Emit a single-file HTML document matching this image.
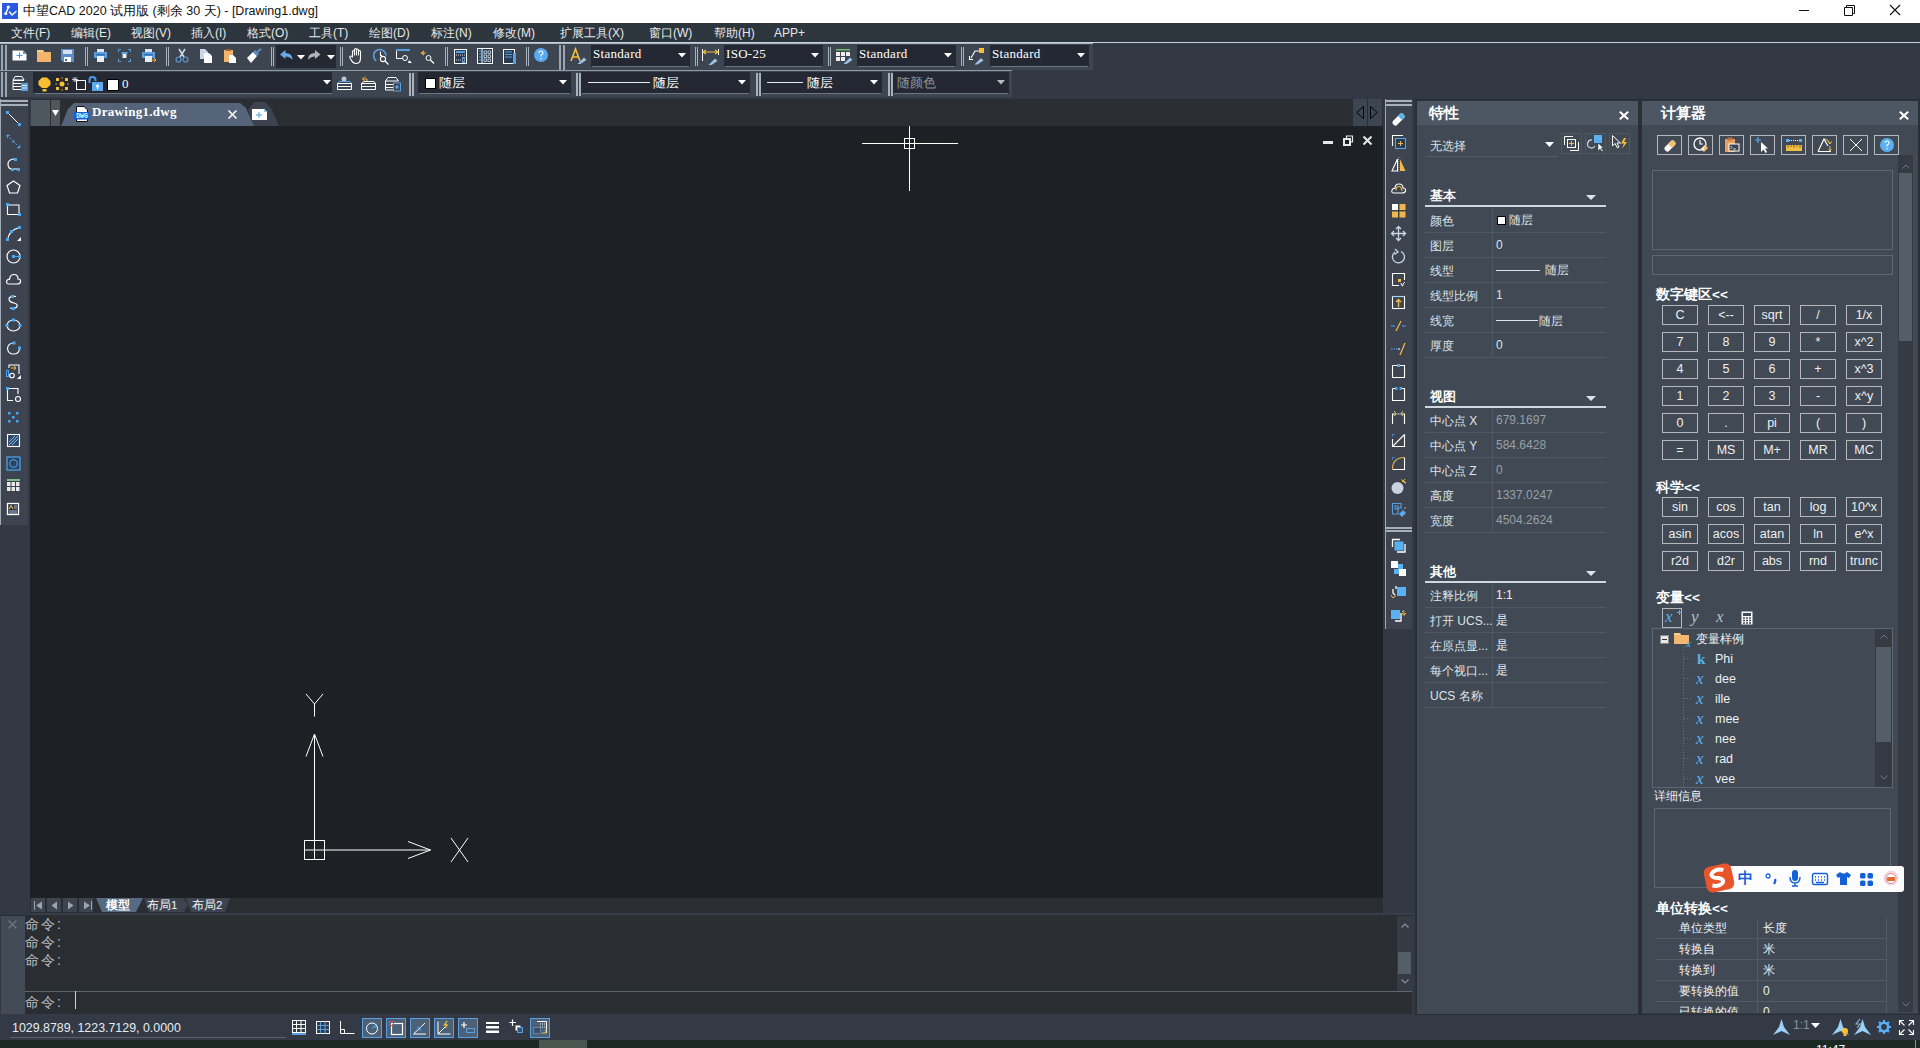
<!DOCTYPE html>
<html><head><meta charset="utf-8">
<style>
*{box-sizing:border-box;margin:0;padding:0}
html,body{width:1920px;height:1048px;overflow:hidden;background:#333944;font-family:"Liberation Sans",sans-serif;font-size:12px;color:#e8ecf0}
.a{position:absolute}
svg{position:absolute;overflow:visible}
.ss{font-family:"Liberation Serif",serif;font-size:13px;letter-spacing:0.3px;white-space:nowrap}
.nw{white-space:nowrap}
</style></head><body>
<!-- title bar -->
<div class="a" style="left:0;top:0;width:1920px;height:23px;background:#fff"></div>
<div class="a" style="left:2px;top:3px;width:16px;height:16px;background:#2a5ae0"></div>
<svg style="left:2px;top:3px" width="16" height="16"><path d="M6.5 4 L3.8 10.5 M7.5 9 L10 12 L14 8.5" stroke="#fff" stroke-width="1.5" fill="none" stroke-linecap="round"/><circle cx="6.3" cy="4" r="1.6" fill="#fff"/><circle cx="3.8" cy="10.5" r="1.6" fill="#fff"/></svg>
<div class="a nw" style="left:23px;top:3px;font-size:12.5px;color:#111;line-height:16px">中望CAD 2020 试用版 (剩余 30 天) - [Drawing1.dwg]</div>
<svg style="left:1799px;top:5px" width="110" height="12"><path d="M0 5.5 H10" stroke="#111" stroke-width="1"/><path d="M45.5 2.5 H53.5 V10.5 H45.5 Z M47.5 2.5 V0.5 H55.5 V8.5 H53.5" stroke="#111" stroke-width="1" fill="none"/><path d="M91 0 L101 10 M101 0 L91 10" stroke="#111" stroke-width="1.1"/></svg>
<!-- menu -->
<div class="a" style="left:0;top:23px;width:1920px;height:19px;background:#2d353d"></div>
<div class="a nw" style="left:0;top:24px;height:18px;line-height:18px;color:#e4e8ec;font-size:12px">
<span class="a" style="left:11px">文件(F)</span><span class="a" style="left:71px">编辑(E)</span><span class="a" style="left:131px">视图(V)</span><span class="a" style="left:191px">插入(I)</span><span class="a" style="left:247px">格式(O)</span><span class="a" style="left:309px">工具(T)</span><span class="a" style="left:369px">绘图(D)</span><span class="a" style="left:431px">标注(N)</span><span class="a" style="left:493px">修改(M)</span><span class="a" style="left:560px">扩展工具(X)</span><span class="a" style="left:649px">窗口(W)</span><span class="a" style="left:714px">帮助(H)</span><span class="a" style="left:774px">APP+</span>
</div>
<div class="a" style="left:0;top:42px;width:1920px;height:1px;background:#c8d2dc"></div>
<!-- tab bar -->
<div class="a" style="left:31px;top:99px;width:1352px;height:27px;background:#2a2d32"></div>
<!-- drawing -->
<div class="a" style="left:30px;top:126px;width:1353px;height:772px;background:#1d2025"></div>
<!-- layout tabs bar -->
<div class="a" style="left:30px;top:898px;width:1353px;height:15px;background:#2a2d32"></div>
<!-- command -->
<div class="a" style="left:1px;top:915px;width:1411px;height:99px;background:#2a2d32"></div>
<!-- left toolbar -->
<div class="a" style="left:0;top:99px;width:28px;height:426px;background:#3d4450;border-left:1px solid #a0aab4"></div>
<!-- right toolbar -->
<div class="a" style="left:1385px;top:99px;width:27px;height:530px;background:#3d4450;border-left:1px solid #a0aab4"></div>
<!-- props panel -->
<div class="a" style="left:1417px;top:101px;width:220px;height:911px;background:#404853"></div>
<!-- calc panel -->
<div class="a" style="left:1642px;top:101px;width:273px;height:911px;background:#404853"></div>
<!-- status -->
<div class="a" style="left:0;top:1014px;width:1920px;height:26px;background:#333a45"></div>
<!-- taskbar -->
<div class="a" style="left:0;top:1040px;width:1920px;height:8px;background:#1c2a26"></div>

<div class="a" style="left:0px;top:43px;width:1093px;height:27px;background:#3d4550;border-top:1px solid #aab5c0"></div>
<div class="a" style="left:1px;top:45px;width:2px;height:25px;background:#9aa6b2;"></div>
<div class="a" style="left:5px;top:45px;width:2px;height:25px;background:#9aa6b2;"></div>
<svg style="left:12px;top:50px" width="15" height="11" viewBox="0 0 15 11"><path d="M0.5 0.5 H11 L14.5 4 V10.5 H0.5 Z" fill="#fff"/><path d="M11 0.5 L14.5 4 H11Z" fill="#5aa0e0"/><path d="M7.5 2.5 V8.5 M4.5 5.5 H10.5" stroke="#4a94dc" stroke-width="1"/></svg>
<svg style="left:37px;top:50px" width="14" height="12" viewBox="0 0 14 12"><path d="M0 0 H6 L7 2 H14 V12 H0Z" fill="#f2b36b"/><path d="M0 0 H6 L7 2 H0Z" fill="#f8d089"/></svg>
<svg style="left:61px;top:49px" width="13" height="13" viewBox="0 0 13 13"><path d="M0 0 H13 V13 H2 L0 11Z" fill="#5b8fcc"/><rect x="2" y="1" width="9" height="4" fill="#d8e2ee"/><rect x="3" y="8" width="7" height="5" fill="#fff"/><rect x="4" y="10" width="2" height="2" fill="#3a6aa8"/></svg>
<div class="a" style="left:85px;top:47px;width:1px;height:19px;background:#a6b1bc;"></div>
<div class="a" style="left:87px;top:47px;width:1px;height:19px;background:#a6b1bc;"></div>
<svg style="left:94px;top:49px" width="13" height="13" viewBox="0 0 13 13"><rect x="3" y="0" width="7" height="4" fill="#dde6f0"/><rect x="0" y="3" width="13" height="6" fill="#5aa0e0"/><rect x="2" y="5" width="9" height="1.5" fill="#3a6aa8"/><rect x="3" y="7" width="7" height="6" fill="#e8eef6"/></svg>
<svg style="left:118px;top:49px" width="13" height="13" viewBox="0 0 13 13"><path d="M0.5 3 V0.5 H3 M10 0.5 H12.5 V3 M12.5 10 V12.5 H10 M3 12.5 H0.5 V10" stroke="#5aa0e0" stroke-width="1" fill="none"/><rect x="3.5" y="3" width="6" height="2" fill="#5aa0e0"/><rect x="4.5" y="5" width="4" height="4" fill="#e8eef6"/></svg>
<svg style="left:142px;top:49px" width="15" height="14" viewBox="0 0 15 14"><rect x="3" y="0" width="7" height="4" fill="#dde6f0"/><rect x="0" y="3" width="13" height="6" fill="#5aa0e0"/><rect x="2" y="5" width="9" height="1.5" fill="#3a6aa8"/><rect x="3" y="7" width="7" height="6" fill="#e8eef6"/><path d="M9 11 H14 M12 9 L14 11 L12 13" stroke="#f0b040" stroke-width="1" fill="none"/></svg>
<div class="a" style="left:166px;top:47px;width:1px;height:19px;background:#a6b1bc;"></div>
<div class="a" style="left:168px;top:47px;width:1px;height:19px;background:#a6b1bc;"></div>
<svg style="left:175px;top:49px" width="14" height="15" viewBox="0 0 14 15"><path d="M4 0 L9 8 M10 0 L5 8" stroke="#c9d8ea" stroke-width="1.6"/><circle cx="3.5" cy="10.5" r="2.5" stroke="#5b97d6" stroke-width="1.2" fill="none"/><circle cx="10.5" cy="10.5" r="2.5" stroke="#5b97d6" stroke-width="1.2" fill="none"/></svg>
<svg style="left:200px;top:49px" width="13" height="14" viewBox="0 0 13 14"><path d="M0 0 H5 L8 3 V10 H0Z" fill="#c9d8ea"/><path d="M4 4 H9 L12 7 V14 H4Z" fill="#fff"/></svg>
<svg style="left:224px;top:49px" width="13" height="14" viewBox="0 0 13 14"><rect x="0" y="1" width="9" height="12" fill="#f2b36b"/><rect x="2" y="0" width="5" height="2" fill="#9a6030"/><path d="M5 6 H9 L12 9 V14 H5Z" fill="#fff"/></svg>
<svg style="left:247px;top:49px" width="15" height="15" viewBox="0 0 15 15"><path d="M0 9 L6 3 L10 7 L4 14Z" fill="#fff"/><path d="M6 3 L10 7 L12 5 L8 1Z" fill="#5b8fcc"/><path d="M10 3 L14 0" stroke="#5b8fcc" stroke-width="2"/></svg>
<div class="a" style="left:271px;top:47px;width:1px;height:19px;background:#a6b1bc;"></div>
<div class="a" style="left:273px;top:47px;width:1px;height:19px;background:#a6b1bc;"></div>
<div class="a" style="left:276px;top:45px;width:60px;height:23px;background:#232833;"></div>
<svg style="left:280px;top:50px" width="13" height="10" viewBox="0 0 13 10"><path d="M0 4.5 L5.5 0 V3 Q12.5 3 12.5 10 Q10 6.5 5.5 6.5 V9Z" fill="#6aa8ea"/></svg>
<svg style="left:297px;top:55px" width="8" height="5" viewBox="0 0 8 5"><path d="M0 0 H8 L4 4.5Z" fill="#fff"/></svg>
<svg style="left:308px;top:50px" width="13" height="10" viewBox="0 0 13 10"><path d="M12.5 4.5 L7 0 V3 Q0 3 0 10 Q2.5 6.5 7 6.5 V9Z" fill="#b0b4b8"/></svg>
<svg style="left:327px;top:55px" width="8" height="5" viewBox="0 0 8 5"><path d="M0 0 H8 L4 4.5Z" fill="#fff"/></svg>
<div class="a" style="left:340px;top:47px;width:1px;height:19px;background:#a6b1bc;"></div>
<div class="a" style="left:342px;top:47px;width:1px;height:19px;background:#a6b1bc;"></div>
<svg style="left:349px;top:48px" width="14" height="16" viewBox="0 0 14 16"><path d="M3.5 9 V3.5 Q3.5 2.5 4.5 2.5 Q5.5 2.5 5.5 3.5 V7 V1.5 Q5.5 0.5 6.5 0.5 Q7.5 0.5 7.5 1.5 V7 V2 Q7.5 1 8.5 1 Q9.5 1 9.5 2 V7 V3.5 Q9.5 2.5 10.5 2.5 Q11.5 2.5 11.5 3.5 V10 Q11.5 15.5 7 15.5 Q4 15.5 2.5 12.5 L0.8 9.5 Q0.5 8 2 8 Q3 8 3.5 9.5" stroke="#fff" stroke-width="1.1" fill="none" stroke-linejoin="round"/></svg>
<svg style="left:373px;top:49px" width="17" height="16" viewBox="0 0 17 16"><path d="M3.2 11.8 A6.2 6.2 0 1 1 13 6.5" stroke="#5aa0e0" stroke-width="1.6" fill="none"/><path d="M7.5 2.5 V6.5 H9" stroke="#fff" stroke-width="1.1" fill="none"/><circle cx="10" cy="10" r="2.6" stroke="#fff" stroke-width="1.1" fill="none"/><path d="M12 12 L15.5 15.5" stroke="#fff" stroke-width="1.3"/></svg>
<svg style="left:396px;top:49px" width="17" height="15" viewBox="0 0 17 15"><rect x="0" y="0" width="14" height="2" fill="#5aa0e0"/><path d="M0.5 2 V9.5 H6" stroke="#fff" stroke-width="1" fill="none"/><circle cx="9" cy="9" r="2.5" stroke="#fff" stroke-width="1" fill="none"/><path d="M13 11 L16 14 H12Z" fill="#fff"/></svg>
<svg style="left:421px;top:50px" width="14" height="14" viewBox="0 0 14 14"><path d="M0.5 3 H5 M3 1 L0.5 3 L3 5" stroke="#f0b040" stroke-width="1.1" fill="none"/><circle cx="7.5" cy="8" r="2.5" stroke="#fff" stroke-width="1" fill="none"/><path d="M9.5 10 L13 13.5" stroke="#fff" stroke-width="1.2"/></svg>
<div class="a" style="left:445px;top:47px;width:1px;height:19px;background:#a6b1bc;"></div>
<div class="a" style="left:447px;top:47px;width:1px;height:19px;background:#a6b1bc;"></div>
<svg style="left:454px;top:49px" width="13" height="15" viewBox="0 0 13 15"><rect x="0.5" y="0.5" width="12" height="14" stroke="#fff" stroke-width="1" fill="#2a3a50"/><rect x="2" y="2" width="9" height="2" fill="#5aa0e0"/><path d="M2 6 H11 M2 11 H11" stroke="#dde" stroke-width="1" stroke-dasharray="1 1"/><rect x="8" y="8" width="3" height="2" fill="#5aa0e0"/><rect x="8" y="12" width="3" height="2" fill="#5aa0e0"/></svg>
<svg style="left:477px;top:48px" width="16" height="16" viewBox="0 0 16 16"><rect x="0.5" y="0.5" width="15" height="15" stroke="#fff" stroke-width="1" fill="#2a3a50"/><path d="M5 1 V15" stroke="#fff"/><path d="M2 3 H4 M2 6 H4 M2 9 H4 M2 12 H4" stroke="#5aa0e0"/><rect x="7" y="3" width="2.5" height="2.5" stroke="#cde" stroke-width="0.8" fill="none"/><rect x="11" y="3" width="2.5" height="2.5" stroke="#cde" stroke-width="0.8" fill="none"/><rect x="7" y="7" width="2.5" height="2.5" stroke="#cde" stroke-width="0.8" fill="none"/><rect x="11" y="7" width="2.5" height="2.5" stroke="#cde" stroke-width="0.8" fill="none"/><rect x="7" y="11" width="2.5" height="2.5" stroke="#cde" stroke-width="0.8" fill="none"/><rect x="11" y="11" width="2.5" height="2.5" stroke="#cde" stroke-width="0.8" fill="none"/></svg>
<svg style="left:503px;top:49px" width="13" height="15" viewBox="0 0 13 15"><rect x="0.5" y="0.5" width="11" height="14" stroke="#fff" stroke-width="1" fill="#2a3a50"/><path d="M2 3 H9 M2 5.5 H9 M2 8 H9" stroke="#5aa0e0" stroke-width="1.2"/><rect x="10" y="4" width="3" height="11" fill="#5aa0e0"/></svg>
<div class="a" style="left:526px;top:47px;width:1px;height:19px;background:#a6b1bc;"></div>
<div class="a" style="left:528px;top:47px;width:1px;height:19px;background:#a6b1bc;"></div>
<svg style="left:534px;top:48px" width="14" height="14" viewBox="0 0 14 14"><circle cx="7" cy="7" r="7" fill="#5aaaf0"/><path d="M5 5 Q5 3 7 3 Q9 3 9 5 Q9 6.5 7 7 V8.5" stroke="#fff" stroke-width="1.1" fill="none"/><rect x="6.5" y="10" width="1.2" height="1.2" fill="#fff"/></svg>
<div class="a" style="left:559px;top:45px;width:2px;height:25px;background:#9aa6b2;"></div>
<div class="a" style="left:563px;top:45px;width:2px;height:25px;background:#9aa6b2;"></div>
<svg style="left:570px;top:48px" width="17" height="16" viewBox="0 0 17 16"><path d="M1 13 L5.5 1 L10 13 M3 9 H8" stroke="#f0c040" stroke-width="1.6" fill="none"/><path d="M7.5 16 L14 9.5 L16.5 12 L10.5 16Z" fill="#9cc0e6"/></svg>
<div class="a" style="left:591px;top:45px;width:99px;height:22px;background:#232833;"></div>
<div class="a" style="left:592px;top:66px;width:97px;height:1px;background:#6c7783;"></div>
<div class="a ss" style="left:593px;top:47px;line-height:14px;color:#fff">Standard</div>
<svg style="left:678px;top:53px" width="8" height="5" viewBox="0 0 8 5"><path d="M0 0 H8 L4 4.5Z" fill="#fff"/></svg>
<div class="a" style="left:695px;top:47px;width:1px;height:19px;background:#a6b1bc;"></div>
<div class="a" style="left:697px;top:47px;width:1px;height:19px;background:#a6b1bc;"></div>
<svg style="left:702px;top:49px" width="17" height="15" viewBox="0 0 17 15"><path d="M0.5 0 V12 M16.5 0 V6" stroke="#fff" stroke-width="1"/><path d="M1 3 H16 M4 1 L1 3 L4 5 M13 1 L16 3 L13 5" stroke="#f0c040" stroke-width="1.1" fill="none"/><path d="M6.5 16 L13 9.5 L15.5 12 L9.5 16Z" fill="#9cc0e6"/></svg>
<div class="a" style="left:724px;top:45px;width:99px;height:22px;background:#232833;"></div>
<div class="a" style="left:725px;top:66px;width:97px;height:1px;background:#6c7783;"></div>
<div class="a ss" style="left:726px;top:47px;line-height:14px;color:#fff">ISO-25</div>
<svg style="left:811px;top:53px" width="8" height="5" viewBox="0 0 8 5"><path d="M0 0 H8 L4 4.5Z" fill="#fff"/></svg>
<div class="a" style="left:828px;top:47px;width:1px;height:19px;background:#a6b1bc;"></div>
<div class="a" style="left:830px;top:47px;width:1px;height:19px;background:#a6b1bc;"></div>
<svg style="left:836px;top:49px" width="16" height="14" viewBox="0 0 16 14"><rect x="0" y="0" width="14" height="1.5" fill="#6cc070"/><rect x="0" y="3" width="4" height="4" fill="#eee"/><rect x="5" y="3" width="4" height="4" fill="#eee"/><rect x="10" y="3" width="4" height="4" fill="#eee"/><rect x="0" y="8" width="4" height="4" fill="#eee"/><rect x="5" y="8" width="4" height="4" fill="#eee"/><path d="M7.5 15 L14 8.5 L16.5 11 L10.5 15Z" fill="#9cc0e6"/></svg>
<div class="a" style="left:857px;top:45px;width:99px;height:22px;background:#232833;"></div>
<div class="a" style="left:858px;top:66px;width:97px;height:1px;background:#6c7783;"></div>
<div class="a ss" style="left:859px;top:47px;line-height:14px;color:#fff">Standard</div>
<svg style="left:944px;top:53px" width="8" height="5" viewBox="0 0 8 5"><path d="M0 0 H8 L4 4.5Z" fill="#fff"/></svg>
<div class="a" style="left:961px;top:47px;width:1px;height:19px;background:#a6b1bc;"></div>
<div class="a" style="left:963px;top:47px;width:1px;height:19px;background:#a6b1bc;"></div>
<svg style="left:969px;top:48px" width="16" height="16" viewBox="0 0 16 16"><rect x="10" y="0" width="5" height="5" fill="#f8c030"/><path d="M10 3 H6 L2 10" stroke="#fff" stroke-width="1.1" fill="none"/><path d="M0.5 8 L0.5 11.5 H4" stroke="#fff" stroke-width="1.1" fill="none"/><path d="M5.5 16.5 L12 10 L14.5 12.5 L8.5 16.5Z" fill="#9cc0e6"/></svg>
<div class="a" style="left:990px;top:45px;width:99px;height:22px;background:#232833;"></div>
<div class="a" style="left:991px;top:66px;width:97px;height:1px;background:#6c7783;"></div>
<div class="a ss" style="left:992px;top:47px;line-height:14px;color:#fff">Standard</div>
<svg style="left:1077px;top:53px" width="8" height="5" viewBox="0 0 8 5"><path d="M0 0 H8 L4 4.5Z" fill="#fff"/></svg>
<div class="a" style="left:0px;top:70px;width:1012px;height:27px;background:#3d4550;border-top:1px solid #8e9aa6"></div>
<div class="a" style="left:1px;top:72px;width:2px;height:25px;background:#9aa6b2;"></div>
<div class="a" style="left:5px;top:72px;width:2px;height:25px;background:#9aa6b2;"></div>
<svg style="left:12px;top:76px" width="17" height="16" viewBox="0 0 17 16"><path d="M3 0.5 H10 L12 4 H1Z" stroke="#fff" stroke-width="1" fill="none"/><path d="M1 4.5 H12 M1 4.5 V7.5 H9 M1 7.5 V10.5 H9 M1 10.5 V13.5 H9" stroke="#fff" stroke-width="1" fill="none"/><rect x="9" y="7" width="7" height="8" fill="#5aa0e0"/><path d="M10 9.5 H15 M10 12 H15" stroke="#d8ecff" stroke-width="1"/></svg>
<div class="a" style="left:33px;top:72px;width:299px;height:21px;background:#232833;"></div>
<div class="a" style="left:35px;top:93px;width:297px;height:1px;background:#6c7783;"></div>
<svg style="left:38px;top:77px" width="13" height="15" viewBox="0 0 13 15"><path d="M4 0.5 H9 L12.5 4 V8 L9 11 H4 L0.5 8 V4Z" fill="#f8c030"/><rect x="4.5" y="12" width="4" height="2.5" fill="#f8c030"/></svg>
<svg style="left:55px;top:77px" width="14" height="14" viewBox="0 0 14 14"><rect x="1" y="1" width="3" height="3" fill="#f8c030"/><rect x="10" y="1" width="3" height="3" fill="#f8c030"/><rect x="1" y="10" width="3" height="3" fill="#f8c030"/><rect x="10" y="10" width="3" height="3" fill="#f8c030"/><circle cx="7" cy="7" r="2.5" fill="#f8c030"/><path d="M7 0 L6 1.5 H8Z M7 14 L6 12.5 H8Z M0 7 L1.5 6 V8Z M14 7 L12.5 6 V8Z" fill="#f8c030"/></svg>
<svg style="left:72px;top:77px" width="14" height="13" viewBox="0 0 14 13"><rect x="4.5" y="3.5" width="9" height="9" stroke="#fff" stroke-width="1" fill="none"/><path d="M0 2.5 H6 M3 0 V5 M1 0.5 L5 4.5 M5 0.5 L1 4.5" stroke="#dde" stroke-width="0.9"/></svg>
<svg style="left:88px;top:76px" width="16" height="16" viewBox="0 0 16 16"><path d="M1.5 7 V4 Q1.5 1 4.5 1 Q7.5 1 7.5 4 V5" stroke="#4a9ae8" stroke-width="2" fill="none"/><rect x="4" y="6" width="11" height="9" fill="#5aaaf0"/><circle cx="9.5" cy="10" r="1.5" fill="#fff"/><rect x="9" y="10" width="1.2" height="3" fill="#fff"/></svg>
<div class="a" style="left:107px;top:79px;width:12px;height:12px;background:#fff;border:1px solid #000"></div>
<div class="a ss" style="left:122px;top:77px;line-height:14px;color:#fff">0</div>
<svg style="left:323px;top:80px" width="8" height="5" viewBox="0 0 8 5"><path d="M0 0 H8 L4 4.5Z" fill="#fff"/></svg>
<svg style="left:337px;top:76px" width="16" height="15" viewBox="0 0 16 15"><circle cx="7" cy="3" r="2.5" fill="#b8c8dc"/><path d="M2 5.5 H13 L14.5 7.5 H0.5Z" stroke="#5aa0e0" stroke-width="1" fill="none"/><path d="M0.5 7.5 H14.5 M0.5 10.5 H14.5 M0.5 13.5 H14.5 M0.5 7.5 V13.5 M14.5 7.5 V13.5" stroke="#fff" stroke-width="1" fill="none"/></svg>
<svg style="left:361px;top:76px" width="16" height="15" viewBox="0 0 16 15"><path d="M4 0.5 L1.5 3 L4 5.5 M1.5 3 H6 V5" stroke="#f0b040" stroke-width="1" fill="none"/><path d="M3 5.5 H13 L14.5 7.5 H0.5Z" stroke="#fff" stroke-width="1" fill="none"/><path d="M0.5 7.5 H14.5 M0.5 10.5 H14.5 M0.5 13.5 H14.5 M0.5 7.5 V13.5 M14.5 7.5 V13.5" stroke="#fff" stroke-width="1" fill="none"/></svg>
<svg style="left:385px;top:76px" width="16" height="15" viewBox="0 0 16 15"><path d="M3 1.5 H11 L13.5 5 H0.5Z" stroke="#fff" stroke-width="1" fill="none"/><path d="M0.5 5 V14 H8 M0.5 8.5 H8 M0.5 11.5 H8" stroke="#fff" stroke-width="1" fill="none"/><rect x="8.5" y="7" width="7" height="8" stroke="#5aa0e0" stroke-width="1" fill="none"/><rect x="10.5" y="9.5" width="3" height="3" fill="#5aa0e0"/></svg>
<div class="a" style="left:409px;top:73px;width:1.5px;height:23px;background:#a6b1bc;"></div>
<div class="a" style="left:412px;top:73px;width:1.5px;height:23px;background:#a6b1bc;"></div>
<div class="a" style="left:418px;top:72px;width:153px;height:22px;background:#232833;"></div>
<div class="a" style="left:419px;top:93px;width:151px;height:1px;background:#6c7783;"></div>
<svg style="left:559px;top:80px" width="8" height="5" viewBox="0 0 8 5"><path d="M0 0 H8 L4 4.5Z" fill="#fff"/></svg>
<div class="a" style="left:425px;top:78px;width:11px;height:11px;background:#fff;border:1px solid #000"></div>
<div class="a nw" style="left:439px;top:75px;line-height:16px;color:#fff;font-size:12.5px">随层</div>
<div class="a" style="left:576px;top:73px;width:1.5px;height:23px;background:#a6b1bc;"></div>
<div class="a" style="left:579px;top:73px;width:1.5px;height:23px;background:#a6b1bc;"></div>
<div class="a" style="left:581px;top:72px;width:169px;height:22px;background:#232833;"></div>
<div class="a" style="left:582px;top:93px;width:167px;height:1px;background:#6c7783;"></div>
<svg style="left:738px;top:80px" width="8" height="5" viewBox="0 0 8 5"><path d="M0 0 H8 L4 4.5Z" fill="#fff"/></svg>
<div class="a" style="left:588px;top:82px;width:62px;height:1px;background:#e8ecf0;"></div>
<div class="a nw" style="left:653px;top:75px;line-height:16px;color:#fff;font-size:12.5px">随层</div>
<div class="a" style="left:756px;top:73px;width:1.5px;height:23px;background:#a6b1bc;"></div>
<div class="a" style="left:759px;top:73px;width:1.5px;height:23px;background:#a6b1bc;"></div>
<div class="a" style="left:761px;top:72px;width:121px;height:22px;background:#232833;"></div>
<div class="a" style="left:762px;top:93px;width:119px;height:1px;background:#6c7783;"></div>
<svg style="left:870px;top:80px" width="8" height="5" viewBox="0 0 8 5"><path d="M0 0 H8 L4 4.5Z" fill="#fff"/></svg>
<div class="a" style="left:767px;top:82px;width:36px;height:1px;background:#e8ecf0;"></div>
<div class="a nw" style="left:807px;top:75px;line-height:16px;color:#fff;font-size:12.5px">随层</div>
<div class="a" style="left:888px;top:73px;width:1.5px;height:23px;background:#a6b1bc;"></div>
<div class="a" style="left:891px;top:73px;width:1.5px;height:23px;background:#a6b1bc;"></div>
<div class="a" style="left:893px;top:72px;width:116px;height:22px;background:#232833;"></div>
<div class="a" style="left:894px;top:93px;width:114px;height:1px;background:#6c7783;"></div>
<svg style="left:997px;top:80px" width="8" height="5" viewBox="0 0 8 5"><path d="M0 0 H8 L4 4.5Z" fill="#b8bcc0"/></svg>
<div class="a nw" style="left:897px;top:75px;line-height:16px;color:#8e959c;font-size:12.5px">随颜色</div>
<div class="a" style="left:1px;top:100px;width:27px;height:2px;background:#a6b1bc;"></div>
<div class="a" style="left:1px;top:104px;width:27px;height:2px;background:#a6b1bc;"></div>
<svg style="left:6px;top:111px" width="15" height="15" viewBox="0 0 15 15"><path d="M1.5 1.5 L13.5 13.5" stroke="#fff" stroke-width="1"/><rect x="0" y="0" width="3" height="3" fill="#4aa8f0"/><rect x="12" y="12" width="3" height="3" fill="#4aa8f0"/></svg>
<svg style="left:6px;top:134px" width="15" height="15" viewBox="0 0 15 15"><path d="M1 1 L14 14" stroke="#4aa8f0" stroke-width="1" stroke-dasharray="2 2"/><path d="M1 1 L4 1.5 M1 1 L1.5 4 M14 14 L11 13.5 M14 14 L13.5 11" stroke="#4aa8f0" stroke-width="1"/><rect x="6.5" y="6.5" width="2" height="2" fill="#4aa8f0"/></svg>
<svg style="left:6px;top:157px" width="15" height="15" viewBox="0 0 15 15"><path d="M9 2 Q2 2 2 7 Q2 12 6 12 H12" stroke="#fff" stroke-width="1.2" fill="none"/><rect x="8" y="1" width="3" height="3" fill="#4aa8f0"/><rect x="5" y="11" width="3" height="3" fill="#4aa8f0"/><rect x="11" y="11" width="3" height="3" fill="#4aa8f0"/></svg>
<svg style="left:6px;top:180px" width="15" height="15" viewBox="0 0 15 15"><path d="M7.5 1 L14 5.5 L11.5 13 H3.5 L1 5.5Z" stroke="#fff" stroke-width="1.2" fill="none"/></svg>
<svg style="left:6px;top:203px" width="15" height="15" viewBox="0 0 15 15"><path d="M1.5 2 V11.5 H13 V2 H2" stroke="#fff" stroke-width="1.1" fill="none"/><rect x="0" y="0" width="3" height="3" fill="#4aa8f0"/><rect x="12" y="10" width="3" height="3" fill="#4aa8f0"/></svg>
<svg style="left:6px;top:226px" width="15" height="15" viewBox="0 0 15 15"><path d="M1.5 14 Q3 4 13.5 1.5" stroke="#fff" stroke-width="1.2" fill="none"/><rect x="0" y="12" width="3" height="3" fill="#4aa8f0"/><rect x="4" y="4" width="3" height="3" fill="#4aa8f0"/><rect x="12" y="0" width="3" height="3" fill="#4aa8f0"/><path d="M15 11 V15 H11Z" fill="#fff"/></svg>
<svg style="left:6px;top:249px" width="15" height="15" viewBox="0 0 15 15"><circle cx="7.5" cy="7.5" r="6.5" stroke="#fff" stroke-width="1.2" fill="none"/><rect x="6" y="6" width="3" height="3" fill="#4aa8f0"/><path d="M9 7.5 H13" stroke="#4aa8f0" stroke-width="1"/><rect x="12.5" y="6" width="2.5" height="3" fill="#4aa8f0"/></svg>
<svg style="left:6px;top:272px" width="15" height="15" viewBox="0 0 15 15"><path d="M3 12 Q0 12 0.7 9 Q1.5 7 3.5 7.5 Q4 2.5 8 2.5 Q12 2.5 12 7 Q15 7 14.5 10 Q14 12 11 12Z" stroke="#fff" stroke-width="1.2" fill="none"/></svg>
<svg style="left:6px;top:295px" width="15" height="15" viewBox="0 0 15 15"><path d="M10 1.5 Q3 1 3 4 Q3 7 8 8 Q12 9 11 11.5 Q10 14 4 13" stroke="#fff" stroke-width="1.2" fill="none"/><rect x="5" y="0" width="3" height="3" fill="#4aa8f0"/><rect x="6" y="12" width="3" height="3" fill="#4aa8f0"/></svg>
<svg style="left:6px;top:318px" width="15" height="15" viewBox="0 0 15 15"><ellipse cx="7.5" cy="7.5" rx="6.5" ry="5.5" stroke="#fff" stroke-width="1.2" fill="none"/><rect x="6" y="0.5" width="3" height="3" fill="#4aa8f0"/><rect x="12.5" y="6" width="3" height="3" fill="#4aa8f0"/><rect x="-0.5" y="6" width="3" height="3" fill="#4aa8f0"/></svg>
<svg style="left:6px;top:341px" width="15" height="15" viewBox="0 0 15 15"><path d="M8 2 Q2 2 1.5 7.5 Q2 13 7.5 13 Q13 13 13.5 8" stroke="#fff" stroke-width="1.2" fill="none"/><rect x="6.5" y="0.5" width="3" height="3" fill="#4aa8f0"/><rect x="12" y="5.5" width="3" height="3" fill="#4aa8f0"/></svg>
<svg style="left:6px;top:364px" width="15" height="15" viewBox="0 0 15 15"><path d="M3 4 V1 H13 V10" stroke="#fff" stroke-width="1.1" fill="none"/><path d="M5 4 H10 M8 2 L10 4 L8 6" stroke="#f0b848" stroke-width="1" fill="none"/><rect x="0.5" y="6.5" width="2" height="6" fill="none" stroke="#4aa8f0"/><circle cx="6" cy="11.5" r="2.3" stroke="#fff" stroke-width="1.1" fill="none"/><path d="M15 11 V15 H11Z" fill="#fff"/></svg>
<svg style="left:6px;top:387px" width="15" height="15" viewBox="0 0 15 15"><path d="M3 1.5 H12 V7 M1.5 3 V13.5 H7" stroke="#fff" stroke-width="1.1" fill="none"/><rect x="0" y="0" width="3" height="3" fill="#4aa8f0"/><circle cx="12" cy="12" r="2.5" stroke="#fff" stroke-width="1.1" fill="none"/></svg>
<svg style="left:6px;top:410px" width="15" height="15" viewBox="0 0 15 15"><rect x="2" y="2" width="2.5" height="2.5" fill="#4aa8f0"/><rect x="10" y="2" width="2.5" height="2.5" fill="#4aa8f0"/><rect x="6" y="6" width="2.5" height="2.5" fill="#4aa8f0"/><rect x="2" y="10" width="2.5" height="2.5" fill="#4aa8f0"/><rect x="10" y="10" width="2.5" height="2.5" fill="#4aa8f0"/></svg>
<svg style="left:6px;top:433px" width="15" height="15" viewBox="0 0 15 15"><rect x="1.5" y="1.5" width="12" height="12" stroke="#fff" stroke-width="1.1" fill="#2e4a6a"/><path d="M3 9 L9 3 M3 12 L12 3 M6 12 L12 6" stroke="#8ab8e8" stroke-width="1"/></svg>
<svg style="left:6px;top:456px" width="15" height="15" viewBox="0 0 15 15"><rect x="1" y="1" width="13" height="13" stroke="#4aa8f0" stroke-width="1.2" fill="#2c4260"/><circle cx="7.5" cy="7.5" r="3.8" stroke="#4aa8f0" stroke-width="1.1" fill="none"/></svg>
<svg style="left:6px;top:479px" width="15" height="15" viewBox="0 0 15 15"><rect x="1" y="0" width="13" height="2" fill="#7cc08a"/><rect x="1" y="3" width="3.5" height="4" fill="#e8e8e8"/><rect x="5.5" y="3" width="3.5" height="4" fill="#e8e8e8"/><rect x="10" y="3" width="3.5" height="4" fill="#e8e8e8"/><rect x="1" y="8" width="3.5" height="4" fill="#e8e8e8"/><rect x="5.5" y="8" width="3.5" height="4" fill="#e8e8e8"/><rect x="10" y="8" width="3.5" height="4" fill="#e8e8e8"/></svg>
<svg style="left:6px;top:502px" width="15" height="15" viewBox="0 0 15 15"><rect x="1.5" y="1.5" width="11" height="11" stroke="#fff" stroke-width="1.3" fill="#2a3444"/><path d="M3 7 L5 3.5 L7 7" stroke="#f0b848" stroke-width="1.1" fill="none"/><path d="M8 4 H11 M8 6 H11 M3 9 H11 M3 11 H11" stroke="#b8cce0" stroke-width="0.9"/></svg>
<div class="a" style="left:1386px;top:100px;width:26px;height:2px;background:#a6b1bc;"></div>
<div class="a" style="left:1386px;top:104px;width:26px;height:2px;background:#a6b1bc;"></div>
<svg style="left:1391px;top:111px" width="15" height="15" viewBox="0 0 15 15"><path d="M2 10 L9 3 Q10.5 1.5 12 3 L13 4 Q14.5 5.5 13 7 L6 14 Q4.5 15.5 3 14 L2 13 Q0.5 11.5 2 10Z" fill="#fff"/><path d="M7 5 L9 3 Q10.5 1.5 12 3 L13 4 Q14.5 5.5 13 7 L11 9Z" fill="#5ab0f0"/></svg>
<svg style="left:1391px;top:134px" width="15" height="15" viewBox="0 0 15 15"><path d="M1.5 12 V1.5 H12" stroke="#fff" stroke-width="1.1" fill="none"/><rect x="4.5" y="4.5" width="10" height="10" stroke="#5aa0e0" stroke-width="1.1" fill="#2a3a50"/><path d="M9.5 7 V12 M7 9.5 H12" stroke="#f0b848" stroke-width="1.1"/></svg>
<svg style="left:1391px;top:157px" width="15" height="15" viewBox="0 0 15 15"><path d="M6.5 2 V14 H1Z" stroke="#fff" stroke-width="1.1" fill="none"/><path d="M9 2 L14.5 14 H9Z" fill="#f0b848"/><path d="M7.8 0 V15" stroke="#ccc" stroke-width="0.6" stroke-dasharray="1 1"/></svg>
<svg style="left:1391px;top:180px" width="15" height="15" viewBox="0 0 15 15"><path d="M3 13 Q0 13 1 10 Q2 8 4 8.5 Q4 4 8 4 Q12 4 12 8 Q15 8 14.5 11 Q14 13 11 13Z" stroke="#fff" stroke-width="1.1" fill="none"/><path d="M5 10.5 Q5 6.5 8 6.5 Q10.5 6.5 10.5 10 H12" stroke="#f0b848" stroke-width="1.1" fill="none"/></svg>
<svg style="left:1391px;top:203px" width="15" height="15" viewBox="0 0 15 15"><rect x="1" y="1" width="6" height="6" fill="#fff"/><rect x="8.5" y="1" width="6" height="6" fill="#f0b848"/><rect x="1" y="8.5" width="6" height="6" fill="#f0b848"/><rect x="8.5" y="8.5" width="6" height="6" fill="#f0b848"/></svg>
<svg style="left:1391px;top:226px" width="15" height="15" viewBox="0 0 15 15"><path d="M7.5 0.5 V14.5 M0.5 7.5 H14.5 M5 3 L7.5 0.5 L10 3 M5 12 L7.5 14.5 L10 12 M3 5 L0.5 7.5 L3 10 M12 5 L14.5 7.5 L12 10" stroke="#c8d6e6" stroke-width="1.3" fill="none"/></svg>
<svg style="left:1391px;top:249px" width="15" height="15" viewBox="0 0 15 15"><path d="M10 2.5 A6 6 0 1 1 4 3" stroke="#c8d6e6" stroke-width="1.3" fill="none"/><path d="M4 0 L7 3 L3.5 5.5" stroke="#c8d6e6" stroke-width="1.3" fill="none"/></svg>
<svg style="left:1391px;top:272px" width="15" height="15" viewBox="0 0 15 15"><path d="M13.5 8 V1.5 H1.5 V13.5 H8" stroke="#fff" stroke-width="1.1" fill="none"/><rect x="7" y="7" width="3" height="3" fill="#f0b848"/><path d="M10 11 Q10 14 12 14 M14 10 L12 12 V14" stroke="#fff" stroke-width="0.9" fill="none"/></svg>
<svg style="left:1391px;top:295px" width="15" height="15" viewBox="0 0 15 15"><rect x="1.5" y="1.5" width="12" height="12" stroke="#fff" stroke-width="1.1" fill="none"/><path d="M1.5 1.5 H13.5" stroke="#4aa8f0" stroke-width="1.1" stroke-dasharray="1 1"/><path d="M7.5 12 V5 M5 7 L7.5 4.5 L10 7" stroke="#f0b848" stroke-width="1.5" fill="none"/></svg>
<svg style="left:1391px;top:318px" width="15" height="15" viewBox="0 0 15 15"><path d="M0 8 H4 M11 8 H15" stroke="#4aa8f0" stroke-width="1"/><path d="M5 13 L10 3" stroke="#f0b848" stroke-width="1.3"/></svg>
<svg style="left:1391px;top:341px" width="15" height="15" viewBox="0 0 15 15"><path d="M0 8 H7" stroke="#4aa8f0" stroke-width="1" stroke-dasharray="1.5 1"/><path d="M7 8 H9" stroke="#fff"/><path d="M9 14 L14 2" stroke="#f0b848" stroke-width="1.3"/></svg>
<svg style="left:1391px;top:364px" width="15" height="15" viewBox="0 0 15 15"><path d="M1.5 1.5 V13.5 H13.5 V1.5 H9 M6 1.5 H1.5" stroke="#fff" stroke-width="1.1" fill="none"/><rect x="6" y="0" width="3" height="3" fill="#4aa8f0"/></svg>
<svg style="left:1391px;top:387px" width="15" height="15" viewBox="0 0 15 15"><path d="M1.5 1.5 V13.5 H13.5 V1.5 H11 M4 1.5 H1.5" stroke="#fff" stroke-width="1.1" fill="none"/><rect x="4" y="0" width="2.5" height="3" fill="#4aa8f0"/><rect x="8.5" y="0" width="2.5" height="3" fill="#4aa8f0"/></svg>
<svg style="left:1391px;top:410px" width="15" height="15" viewBox="0 0 15 15"><path d="M1.5 14 V4 H5 M10 4 H13.5 V14" stroke="#fff" stroke-width="1.1" fill="none"/><path d="M3 1 L5.5 4 L3 6 M12 1 L9.5 4 L12 6" stroke="#f0b848" stroke-width="1" fill="none"/><rect x="6.5" y="3" width="2" height="2" fill="#4aa8f0"/></svg>
<svg style="left:1391px;top:433px" width="15" height="15" viewBox="0 0 15 15"><path d="M1.5 1.5 H4 M1.5 1.5 V4" stroke="#4aa8f0" stroke-width="1" stroke-dasharray="1 1"/><path d="M13.5 1.5 V13.5 H1.5 V6" stroke="#fff" stroke-width="1.1" fill="none"/><path d="M1.5 13.5 L13.5 1.5" stroke="#fff" stroke-width="1.1"/></svg>
<svg style="left:1391px;top:456px" width="15" height="15" viewBox="0 0 15 15"><path d="M1.5 1.5 H4 M1.5 1.5 V4" stroke="#4aa8f0" stroke-width="1" stroke-dasharray="1 1"/><path d="M13.5 1.5 V13.5 H1.5" stroke="#fff" stroke-width="1.1" fill="none"/><path d="M1.5 13 Q1.5 2 13 1.5" stroke="#f0b848" stroke-width="1.1" fill="none"/></svg>
<svg style="left:1391px;top:479px" width="15" height="15" viewBox="0 0 15 15"><circle cx="6.5" cy="9" r="6" fill="#c8d2e0"/><path d="M11 3 L14 0 M12 1 L15 4 M10.5 0.5 L14.5 4.5" stroke="#f0b848" stroke-width="1"/></svg>
<svg style="left:1391px;top:502px" width="15" height="15" viewBox="0 0 15 15"><path d="M1.5 1.5 H10 V6 H7 V12 H1.5Z" stroke="#5aa0e0" stroke-width="1.1" fill="none"/><rect x="4" y="4" width="3" height="3" stroke="#5aa0e0" fill="none"/><path d="M8 12 L12 8 L15 11 L11 15Z" fill="#5aaaf0"/><path d="M13 7 L15 5" stroke="#aaa"/></svg>
<div class="a" style="left:1386px;top:527px;width:26px;height:2px;background:#a6b1bc;"></div>
<div class="a" style="left:1386px;top:530px;width:26px;height:2px;background:#a6b1bc;"></div>
<svg style="left:1391px;top:538px" width="15" height="15" viewBox="0 0 15 15"><path d="M1.5 9 V1.5 H9" stroke="#fff" stroke-width="1.3" fill="none"/><rect x="3.5" y="3.5" width="9" height="9" fill="#5ab0f0"/><path d="M14 6 V14 H6" stroke="#fff" stroke-width="1.3" fill="none"/></svg>
<svg style="left:1391px;top:561px" width="15" height="15" viewBox="0 0 15 15"><rect x="0" y="0" width="7" height="7" fill="#fff"/><rect x="7" y="3" width="5" height="5" fill="#5ab0f0"/><rect x="3" y="8" width="5" height="5" fill="#5ab0f0"/><rect x="8" y="8" width="7" height="7" fill="#fff"/></svg>
<svg style="left:1391px;top:584px" width="15" height="15" viewBox="0 0 15 15"><path d="M5 2 V5 M2 5 V9 L4 11" stroke="#fff" stroke-width="1.3" fill="none"/><rect x="6" y="3" width="9" height="9" fill="#5ab0f0"/><path d="M0 11 L2 14 L5 11.5" stroke="#f0b848" stroke-width="1" fill="none"/></svg>
<svg style="left:1391px;top:607px" width="15" height="15" viewBox="0 0 15 15"><rect x="0" y="3" width="9" height="9" fill="#5ab0f0"/><path d="M10 6 V14 H4" stroke="#fff" stroke-width="1.3" fill="none"/><path d="M11 5 Q13 2 13 5 V8 M11 6 L13 8.5 L15 6" stroke="#f0b848" stroke-width="1" fill="none"/></svg>
<div class="a" style="left:31px;top:100px;width:19px;height:26px;background:#4e565e;"></div>
<div class="a" style="left:51px;top:100px;width:9px;height:26px;background:#4e565e;"></div>
<svg style="left:52px;top:110px" width="7" height="6" viewBox="0 0 7 6"><path d="M0 0 H7 L3.5 6Z" fill="#fff"/></svg>
<svg style="left:246px;top:101px" width="35" height="25" viewBox="0 0 35 25"><path d="M8 25 L2 9 L8 1 H19 L25 7 L33 25Z" fill="#3d4450"/></svg>
<svg style="left:60px;top:103px" width="196" height="23" viewBox="0 0 196 23"><path d="M1 23 L8 6 L14 0 H180 L186 5 L194 23Z" fill="#566479"/></svg>
<svg style="left:74px;top:106px" width="16" height="16" viewBox="0 0 16 16"><path d="M2.5 0.5 H10 L13.5 4 V15.5 H2.5Z" fill="#fff" stroke="#111" stroke-width="1"/><rect x="0" y="6" width="16" height="7.5" fill="#1a5fd8"/><text x="8" y="12.3" font-size="6.5" font-family="Liberation Mono" fill="#dff" text-anchor="middle" font-weight="bold">DWG</text></svg>
<div class="a ss" style="left:92px;top:105px;color:#fff;line-height:14px;font-weight:bold;letter-spacing:0.3px">Drawing1.dwg</div>
<svg style="left:228px;top:110px" width="9" height="9" viewBox="0 0 9 9"><path d="M0.5 0.5 L8.5 8.5 M8.5 0.5 L0.5 8.5" stroke="#fff" stroke-width="1.6"/></svg>
<svg style="left:252px;top:108px" width="16" height="13" viewBox="0 0 16 13"><path d="M0 1 H12 L15 4 V12 H0Z" fill="#fff"/><path d="M12 0.5 L15.5 4 H12Z" fill="#8ec8f0"/><path d="M7 4 V10 M4 7 H10" stroke="#4a9ae0" stroke-width="1"/></svg>
<div class="a" style="left:1353px;top:99px;width:14px;height:27px;background:#3d4550;"></div>
<div class="a" style="left:1368px;top:99px;width:14px;height:27px;background:#3d4550;"></div>
<svg style="left:1356px;top:106px" width="22" height="13" viewBox="0 0 22 13"><path d="M7.5 0.5 L0.8 6.5 L7.5 12.5Z M14.5 0.5 L21.2 6.5 L14.5 12.5Z" stroke="#000" stroke-width="1" fill="none"/></svg>
<div class="a" style="left:1323px;top:141px;width:10px;height:3px;background:#e8e8e8;"></div>
<svg style="left:1343px;top:135px" width="11" height="11" viewBox="0 0 11 11"><path d="M1 4 H7 V10 H1Z" stroke="#e8e8e8" stroke-width="2" fill="none"/><path d="M3.5 3 V1 H9.5 V7 H8" stroke="#e8e8e8" stroke-width="1.2" fill="none"/></svg>
<svg style="left:1363px;top:136px" width="9" height="9" viewBox="0 0 9 9"><path d="M0.5 0.5 L8.5 8.5 M8.5 0.5 L0.5 8.5" stroke="#e8e8e8" stroke-width="2"/></svg>
<svg style="left:860px;top:125px" width="100" height="70" viewBox="0 0 100 70"><path d="M2 18.5 H98 M49.5 1 V66" stroke="#fff" stroke-width="1"/><rect x="44.5" y="13.5" width="10" height="10" stroke="#fff" stroke-width="1" fill="none"/></svg>
<svg style="left:300px;top:690px" width="175" height="180" viewBox="0 0 175 180"><g stroke="#fff" stroke-width="1" fill="none">
<path d="M14.5 160 V44"/><path d="M6 66.5 L14.5 44 L23 66.5"/>
<path d="M6 4 L14.5 14 L23 4 M14.5 14 V26.5"/>
<rect x="4.5" y="150.5" width="20" height="19"/><path d="M14.5 150.5 V169.5 M4.5 160 H24.5"/>
<path d="M24.5 160 H130.5"/><path d="M108 151.5 L130.5 160 L108 168.5"/>
<path d="M151 148 L168 172 M168 148 L151 172"/>
</g></svg>
<div class="a" style="left:31px;top:898px;width:14px;height:14px;background:#3d4450;"></div>
<div class="a" style="left:47px;top:898px;width:14px;height:14px;background:#3d4450;"></div>
<div class="a" style="left:63px;top:898px;width:14px;height:14px;background:#3d4450;"></div>
<div class="a" style="left:79px;top:898px;width:14px;height:14px;background:#3d4450;"></div>
<svg style="left:34px;top:901px" width="9" height="9" viewBox="0 0 9 9"><path d="M0.5 0 V9" stroke="#9aa4ae"/><path d="M8 0.5 L2 4.5 L8 8.5Z" fill="#9aa4ae"/></svg>
<svg style="left:51px;top:901px" width="7" height="9" viewBox="0 0 7 9"><path d="M6 0.5 L0.5 4.5 L6 8.5Z" fill="#9aa4ae"/></svg>
<svg style="left:67px;top:901px" width="7" height="9" viewBox="0 0 7 9"><path d="M1 0.5 L6.5 4.5 L1 8.5Z" fill="#9aa4ae"/></svg>
<svg style="left:83px;top:901px" width="9" height="9" viewBox="0 0 9 9"><path d="M1 0.5 L7 4.5 L1 8.5Z" fill="#9aa4ae"/><path d="M8.5 0 V9" stroke="#9aa4ae"/></svg>
<svg style="left:95px;top:898px" width="135" height="14" viewBox="0 0 135 14"><path d="M49 0 L54 14 H89 L93 7 L89 0Z" fill="#3d4450"/><path d="M91 0 L96 14 H130 L135 0Z" fill="#3d4450"/><path d="M1 0 L7 14 H41 L48 0Z" fill="#566a84"/></svg>
<div class="a nw" style="left:106px;top:898px;color:#fff;font-weight:bold;font-size:12px;line-height:14px">模型</div>
<div class="a nw" style="left:147px;top:898px;color:#f0f2f4;font-size:11.5px;line-height:14px">布局1</div>
<div class="a nw" style="left:192px;top:898px;color:#f0f2f4;font-size:11.5px;line-height:14px">布局2</div>
<div class="a" style="left:30px;top:913px;width:1385px;height:2px;background:#383e49;"></div>
<div class="a" style="left:1px;top:916px;width:24px;height:98px;background:#434b57;"></div>
<svg style="left:8px;top:920px" width="9" height="9" viewBox="0 0 9 9"><path d="M0.5 0.5 L8.5 8.5 M8.5 0.5 L0.5 8.5" stroke="#6e7782" stroke-width="1.2"/></svg>
<div class="a nw" style="left:25px;top:916px;color:#b8bcc0;font-size:14px;line-height:16px;letter-spacing:2px">命令:</div>
<div class="a nw" style="left:25px;top:934px;color:#b8bcc0;font-size:14px;line-height:16px;letter-spacing:2px">命令:</div>
<div class="a nw" style="left:25px;top:952px;color:#b8bcc0;font-size:14px;line-height:16px;letter-spacing:2px">命令:</div>
<div class="a" style="left:25px;top:991px;width:1387px;height:1px;background:#5e6670;"></div>
<div class="a nw" style="left:25px;top:994px;color:#b8bcc0;font-size:14px;line-height:16px;letter-spacing:2px">命令:</div>
<div class="a" style="left:75px;top:991px;width:1px;height:18px;background:#d0d4d8;"></div>
<div class="a" style="left:1397px;top:916px;width:15px;height:75px;background:#363b43;"></div>
<svg style="left:1401px;top:923px" width="8" height="5" viewBox="0 0 8 5"><path d="M0.5 4.5 L4 1 L7.5 4.5" stroke="#8a929c" stroke-width="1.2" fill="none"/></svg>
<div class="a" style="left:1398px;top:952px;width:13px;height:22px;background:#545e69;"></div>
<svg style="left:1401px;top:979px" width="8" height="5" viewBox="0 0 8 5"><path d="M0.5 0.5 L4 4 L7.5 0.5" stroke="#8a929c" stroke-width="1.2" fill="none"/></svg>
<div class="a nw" style="left:12px;top:1021px;color:#e8ecf0;font-size:12.4px;line-height:14px">1029.8789, 1223.7129, 0.0000</div>
<div class="a" style="left:10px;top:1037px;width:276px;height:1px;background:#59626c;"></div>
<svg style="left:292px;top:1020px" width="15" height="15" viewBox="0 0 15 15"><rect x="0.5" y="0.5" width="13" height="12" stroke="#fff" fill="none" stroke-width="1"/><path d="M4.5 0.5 V12.5 M9 0.5 V12.5 M0.5 4.5 H13.5 M0.5 8.5 H13.5" stroke="#fff"/><rect x="0" y="13" width="14" height="2" fill="#5aa0e0"/></svg>
<svg style="left:316px;top:1021px" width="15" height="14" viewBox="0 0 15 14"><rect x="0.5" y="0.5" width="13" height="12" stroke="#fff" fill="none" stroke-width="1"/><path d="M4.5 0.5 V12.5 M9 0.5 V12.5 M0.5 4.5 H13.5 M0.5 8.5 H13.5" stroke="#5aa0e0"/></svg>
<svg style="left:340px;top:1021px" width="15" height="14" viewBox="0 0 15 14"><path d="M0.5 0 V12.5 H14.5" stroke="#fff" fill="none"/><path d="M0.5 8.5 H4.5 V12.5" stroke="#fff" fill="none"/></svg>
<div class="a" style="left:362px;top:1018px;width:20px;height:20px;background:#4c6078;border:1px solid #5aa0e0"></div>
<div class="a" style="left:386px;top:1018px;width:20px;height:20px;background:#4c6078;border:1px solid #5aa0e0"></div>
<div class="a" style="left:410px;top:1018px;width:20px;height:20px;background:#4c6078;border:1px solid #5aa0e0"></div>
<div class="a" style="left:434px;top:1018px;width:20px;height:20px;background:#4c6078;border:1px solid #5aa0e0"></div>
<div class="a" style="left:458px;top:1018px;width:20px;height:20px;background:#4c6078;border:1px solid #5aa0e0"></div>
<div class="a" style="left:530px;top:1018px;width:20px;height:20px;background:#4c6078;border:1px solid #5aa0e0"></div>
<svg style="left:365px;top:1021px" width="14" height="14" viewBox="0 0 14 14"><circle cx="7" cy="7.5" r="5.5" stroke="#fff" stroke-width="1" fill="none"/><path d="M7 7.5 L12 3 M8 6 H12" stroke="#5aa0e0" stroke-width="1"/></svg>
<svg style="left:389px;top:1021px" width="14" height="14" viewBox="0 0 14 14"><rect x="2.5" y="2.5" width="11" height="11" stroke="#fff" stroke-width="1.2" fill="none"/><rect x="0.5" y="0.5" width="4" height="4" stroke="#e04848" fill="none"/></svg>
<svg style="left:413px;top:1021px" width="14" height="14" viewBox="0 0 14 14"><path d="M0.5 13 H13 M0.5 13 L12 2" stroke="#fff" stroke-width="1" fill="none"/><rect x="5" y="6.5" width="2.5" height="2.5" stroke="#5aa0e0" fill="none"/></svg>
<svg style="left:437px;top:1021px" width="14" height="14" viewBox="0 0 14 14"><path d="M1 0.5 V13 H13.5 M1 13 L8 6" stroke="#fff" stroke-width="1" fill="none"/><path d="M10 0 L7.5 4 H10 L8.5 7" stroke="#f0c040" stroke-width="1.3" fill="none"/></svg>
<svg style="left:461px;top:1021px" width="14" height="14" viewBox="0 0 14 14"><path d="M3 1 V7 M0 4 H6" stroke="#fff" stroke-width="1.2"/><rect x="5.5" y="7.5" width="8" height="4" stroke="#5aa0e0" fill="none"/></svg>
<svg style="left:486px;top:1022px" width="13" height="11" viewBox="0 0 13 11"><rect x="0" y="0" width="13" height="2" fill="#fff"/><rect x="0" y="4" width="13" height="2.5" fill="#fff"/><rect x="0" y="8.5" width="13" height="2.5" fill="#fff"/></svg>
<svg style="left:509px;top:1019px" width="14" height="14" viewBox="0 0 14 14"><path d="M3.5 0.5 V7 M0.5 3.5 H7" stroke="#fff" stroke-width="1.2"/><rect x="6.5" y="6.5" width="5" height="5" fill="#fff"/><rect x="8.5" y="8.5" width="5" height="5" stroke="#5aa0e0" fill="#3a5070"/></svg>
<svg style="left:533px;top:1021px" width="15" height="15" viewBox="0 0 15 15"><path d="M4 0.5 H13.5 V12" stroke="#fff" fill="none"/><path d="M7 3 H12 M7 6 H12" stroke="#fff" stroke-dasharray="1 1"/><rect x="0.5" y="6.5" width="7" height="6" stroke="#8ac" stroke-dasharray="1 1" fill="#3a5070"/><path d="M9 12 H13 V8" stroke="#f0c040" fill="none"/></svg>
<svg style="left:1773px;top:1019px" width="17" height="17" viewBox="0 0 17 17"><path d="M8.5 0 L11 8 L17 16 L8.5 12 L0 16 L6 8Z" fill="#9cd0f8"/></svg>
<div class="a nw" style="left:1793px;top:1019px;color:#8a929a;font-size:12px;line-height:12px">1:1</div>
<svg style="left:1811px;top:1023px" width="9" height="5" viewBox="0 0 9 5"><path d="M0 0 H9 L4.5 5Z" fill="#fff"/></svg>
<svg style="left:1832px;top:1019px" width="17" height="17" viewBox="0 0 17 17"><path d="M8.5 0 L11 8 L17 16 L8.5 12 L0 16 L6 8Z" fill="#9cd0f8"/><circle cx="13" cy="12" r="3" fill="#f8c030"/><rect x="11.5" y="15" width="3" height="2" fill="#f8c030"/></svg>
<svg style="left:1854px;top:1019px" width="17" height="17" viewBox="0 0 17 17"><path d="M8.5 0 L11 8 L17 16 L8.5 12 L0 16 L6 8Z" fill="#9cd0f8"/><path d="M6 0 L2 5 H6 L3 9" stroke="#8ab0d0" stroke-width="1.2" fill="none"/></svg>
<svg style="left:1877px;top:1020px" width="14" height="14" viewBox="0 0 14 14"><circle cx="7" cy="7" r="4.2" stroke="#5ab0f8" stroke-width="2.6" fill="none"/><path d="M7 0 V3 M7 11 V14 M0 7 H3 M11 7 H14 M2 2 L4 4 M10 10 L12 12 M12 2 L10 4 M4 10 L2 12" stroke="#5ab0f8" stroke-width="2"/></svg>
<svg style="left:1899px;top:1020px" width="15" height="15" viewBox="0 0 15 15"><path d="M0.5 5 V0.5 H5 M10 0.5 H14.5 V5 M14.5 10 V14.5 H10 M5 14.5 H0.5 V10 M1 1 L5.5 5.5 M14 1 L9.5 5.5 M14 14 L9.5 9.5 M1 14 L5.5 9.5" stroke="#fff" stroke-width="1.1" fill="none"/></svg>
<div class="a" style="left:539px;top:1040px;width:48px;height:8px;background:#4a5650;"></div>
<div class="a nw" style="left:1816px;top:1044px;color:#fff;font-size:12px;line-height:12px">11:47</div>
<div class="a" style="left:1915px;top:1040px;width:1px;height:8px;background:#8a9490;"></div>
<div class="a" style="left:1415px;top:99px;width:505px;height:916px;background:#2a2e35;"></div>
<div class="a" style="left:1417px;top:101px;width:221px;height:913px;background:#414954;"></div>
<div class="a" style="left:1417px;top:101px;width:221px;height:24px;background:#4d5763;"></div>
<div class="a nw" style="left:1429px;top:104px;color:#fff;font-weight:bold;font-size:15px;line-height:18px">特性</div>
<svg style="left:1619px;top:111px" width="10" height="9" viewBox="0 0 10 9"><path d="M0.8 0.8 L9.2 8.2 M9.2 0.8 L0.8 8.2" stroke="#fff" stroke-width="2"/></svg>
<div class="a nw" style="left:1430px;top:138px;color:#dfe3e7;font-size:12px;line-height:16px">无选择</div>
<div class="a" style="left:1426px;top:156px;width:131px;height:1px;background:#535c67;"></div>
<svg style="left:1545px;top:142px" width="9" height="5" viewBox="0 0 9 5"><path d="M0 0 H9 L4.5 5Z" fill="#fff"/></svg>
<div class="a" style="left:1561px;top:133px;width:21px;height:21px;background:transparent;border:1px solid #4e5864"></div>
<div class="a" style="left:1585px;top:133px;width:21px;height:21px;background:transparent;border:1px solid #4e5864"></div>
<div class="a" style="left:1609px;top:133px;width:21px;height:21px;background:transparent;border:1px solid #4e5864"></div>
<svg style="left:1564px;top:136px" width="15" height="15" viewBox="0 0 15 15"><path d="M0.5 9 V0.5 H9" stroke="#fff" stroke-width="1" fill="none"/><rect x="3.5" y="3.5" width="8" height="8" stroke="#fff" stroke-width="1" fill="none"/><path d="M14.5 6 V14.5 H6" stroke="#fff" stroke-width="1" fill="none"/><path d="M7.5 5 V10 M5 7.5 H10" stroke="#f0b848" stroke-width="1"/></svg>
<svg style="left:1588px;top:135px" width="16" height="17" viewBox="0 0 16 17"><rect x="6" y="0" width="8" height="8" fill="#5ab0f0"/><path d="M7 11 A4 4 0 1 1 4 5" stroke="#c8d0d8" stroke-width="1.2" fill="none"/><path d="M10 8 V16 L12 14 L14 16.5 L15 15.5 L13 13 H15.5Z" fill="#fff" stroke="#333" stroke-width="0.5"/></svg>
<svg style="left:1612px;top:135px" width="16" height="15" viewBox="0 0 16 15"><path d="M0.5 0.5 V11 L3 8.5 L5.5 13 L7 12 L5 8 H8.5Z" stroke="#fff" stroke-width="1" fill="#414954"/><path d="M12 3 L9 8.5 H12 L10 14 L15 7 H12 L14 3Z" fill="#f8c030"/></svg>
<div class="a nw" style="left:1430px;top:187.5px;color:#fff;font-weight:bold;font-size:12.5px;line-height:16px">基本</div>
<svg style="left:1586px;top:195px" width="10" height="5" viewBox="0 0 10 5"><path d="M0 0 H10 L5 5Z" fill="#dfe3e7"/></svg>
<div class="a" style="left:1425px;top:205px;width:181px;height:2px;background:#cfd7df;"></div>
<div class="a" style="left:1492px;top:208px;width:1px;height:150px;background:#4f5863;"></div>
<div class="a nw" style="left:1430px;top:213px;color:#dfe3e7;font-size:12px;line-height:16px">颜色</div>
<div class="a" style="left:1425px;top:232px;width:181px;height:1px;background:#4f5863;"></div>
<div class="a nw" style="left:1430px;top:238px;color:#dfe3e7;font-size:12px;line-height:16px">图层</div>
<div class="a nw" style="left:1496px;top:237px;color:#dfe3e7;font-size:12px;line-height:16px">0</div>
<div class="a" style="left:1425px;top:257px;width:181px;height:1px;background:#4f5863;"></div>
<div class="a nw" style="left:1430px;top:263px;color:#dfe3e7;font-size:12px;line-height:16px">线型</div>
<div class="a" style="left:1425px;top:282px;width:181px;height:1px;background:#4f5863;"></div>
<div class="a nw" style="left:1430px;top:288px;color:#dfe3e7;font-size:12px;line-height:16px">线型比例</div>
<div class="a nw" style="left:1496px;top:287px;color:#dfe3e7;font-size:12px;line-height:16px">1</div>
<div class="a" style="left:1425px;top:307px;width:181px;height:1px;background:#4f5863;"></div>
<div class="a nw" style="left:1430px;top:313px;color:#dfe3e7;font-size:12px;line-height:16px">线宽</div>
<div class="a" style="left:1425px;top:332px;width:181px;height:1px;background:#4f5863;"></div>
<div class="a nw" style="left:1430px;top:338px;color:#dfe3e7;font-size:12px;line-height:16px">厚度</div>
<div class="a nw" style="left:1496px;top:337px;color:#dfe3e7;font-size:12px;line-height:16px">0</div>
<div class="a" style="left:1425px;top:357px;width:181px;height:1px;background:#4f5863;"></div>
<div class="a" style="left:1497px;top:216px;width:9px;height:9px;background:#fff;border:1px solid #000"></div>
<div class="a nw" style="left:1509px;top:212px;color:#dfe3e7;font-size:12px;line-height:16px">随层</div>
<div class="a" style="left:1496px;top:270px;width:44px;height:1px;background:#dfe3e7;"></div>
<div class="a nw" style="left:1545px;top:262px;color:#dfe3e7;font-size:12px;line-height:16px">随层</div>
<div class="a" style="left:1496px;top:320px;width:42px;height:1px;background:#dfe3e7;"></div>
<div class="a nw" style="left:1539px;top:313px;color:#dfe3e7;font-size:12px;line-height:16px">随层</div>
<div class="a nw" style="left:1430px;top:388.5px;color:#fff;font-weight:bold;font-size:12.5px;line-height:16px">视图</div>
<svg style="left:1586px;top:396px" width="10" height="5" viewBox="0 0 10 5"><path d="M0 0 H10 L5 5Z" fill="#dfe3e7"/></svg>
<div class="a" style="left:1425px;top:406px;width:181px;height:2px;background:#cfd7df;"></div>
<div class="a" style="left:1492px;top:408px;width:1px;height:125px;background:#4f5863;"></div>
<div class="a nw" style="left:1430px;top:413px;color:#dfe3e7;font-size:12px;line-height:16px">中心点 X</div>
<div class="a nw" style="left:1496px;top:412px;color:#98a0a8;font-size:12px;line-height:16px">679.1697</div>
<div class="a" style="left:1425px;top:432px;width:181px;height:1px;background:#4f5863;"></div>
<div class="a nw" style="left:1430px;top:438px;color:#dfe3e7;font-size:12px;line-height:16px">中心点 Y</div>
<div class="a nw" style="left:1496px;top:437px;color:#98a0a8;font-size:12px;line-height:16px">584.6428</div>
<div class="a" style="left:1425px;top:457px;width:181px;height:1px;background:#4f5863;"></div>
<div class="a nw" style="left:1430px;top:463px;color:#dfe3e7;font-size:12px;line-height:16px">中心点 Z</div>
<div class="a nw" style="left:1496px;top:462px;color:#98a0a8;font-size:12px;line-height:16px">0</div>
<div class="a" style="left:1425px;top:482px;width:181px;height:1px;background:#4f5863;"></div>
<div class="a nw" style="left:1430px;top:488px;color:#dfe3e7;font-size:12px;line-height:16px">高度</div>
<div class="a nw" style="left:1496px;top:487px;color:#98a0a8;font-size:12px;line-height:16px">1337.0247</div>
<div class="a" style="left:1425px;top:507px;width:181px;height:1px;background:#4f5863;"></div>
<div class="a nw" style="left:1430px;top:513px;color:#dfe3e7;font-size:12px;line-height:16px">宽度</div>
<div class="a nw" style="left:1496px;top:512px;color:#98a0a8;font-size:12px;line-height:16px">4504.2624</div>
<div class="a" style="left:1425px;top:532px;width:181px;height:1px;background:#4f5863;"></div>
<div class="a nw" style="left:1430px;top:563.5px;color:#fff;font-weight:bold;font-size:12.5px;line-height:16px">其他</div>
<svg style="left:1586px;top:571px" width="10" height="5" viewBox="0 0 10 5"><path d="M0 0 H10 L5 5Z" fill="#dfe3e7"/></svg>
<div class="a" style="left:1425px;top:581px;width:181px;height:2px;background:#cfd7df;"></div>
<div class="a" style="left:1492px;top:583px;width:1px;height:125px;background:#4f5863;"></div>
<div class="a nw" style="left:1430px;top:588px;color:#dfe3e7;font-size:12px;line-height:16px">注释比例</div>
<div class="a nw" style="left:1496px;top:587px;color:#eef0f2;font-size:12px;line-height:16px">1:1</div>
<div class="a" style="left:1425px;top:607px;width:181px;height:1px;background:#4f5863;"></div>
<div class="a nw" style="left:1430px;top:613px;color:#dfe3e7;font-size:12px;line-height:16px">打开 UCS...</div>
<div class="a nw" style="left:1496px;top:612px;color:#eef0f2;font-size:12px;line-height:16px">是</div>
<div class="a" style="left:1425px;top:632px;width:181px;height:1px;background:#4f5863;"></div>
<div class="a nw" style="left:1430px;top:638px;color:#dfe3e7;font-size:12px;line-height:16px">在原点显...</div>
<div class="a nw" style="left:1496px;top:637px;color:#eef0f2;font-size:12px;line-height:16px">是</div>
<div class="a" style="left:1425px;top:657px;width:181px;height:1px;background:#4f5863;"></div>
<div class="a nw" style="left:1430px;top:663px;color:#dfe3e7;font-size:12px;line-height:16px">每个视口...</div>
<div class="a nw" style="left:1496px;top:662px;color:#eef0f2;font-size:12px;line-height:16px">是</div>
<div class="a" style="left:1425px;top:682px;width:181px;height:1px;background:#4f5863;"></div>
<div class="a nw" style="left:1430px;top:688px;color:#dfe3e7;font-size:12px;line-height:16px">UCS 名称</div>
<div class="a" style="left:1425px;top:707px;width:181px;height:1px;background:#4f5863;"></div>
<div class="a" style="left:1642px;top:101px;width:276px;height:913px;background:#414954;"></div>
<div class="a" style="left:1642px;top:101px;width:276px;height:24px;background:#4d5763;"></div>
<div class="a nw" style="left:1661px;top:104px;color:#fff;font-weight:bold;font-size:15px;line-height:18px">计算器</div>
<svg style="left:1899px;top:111px" width="10" height="9" viewBox="0 0 10 9"><path d="M0.8 0.8 L9.2 8.2 M9.2 0.8 L0.8 8.2" stroke="#fff" stroke-width="2"/></svg>
<div class="a" style="left:1657px;top:135px;width:25px;height:20px;background:transparent;border:1px solid #b4b8bc"></div>
<svg style="left:1662px;top:137px" width="16" height="16" viewBox="0 0 16 16"><path d="M3 10 L9 4 Q10.5 2.5 12 4 L13 5 Q14.5 6.5 13 8 L7 14 Q5.5 15.5 4 14 L3 13 Q1.5 11.5 3 10Z" fill="#fff"/><path d="M6 7 L9 4 Q10.5 2.5 12 4 L13 5 Q14.5 6.5 13 8 L10 11Z" fill="#f2c070"/></svg>
<div class="a" style="left:1688px;top:135px;width:25px;height:20px;background:transparent;border:1px solid #b4b8bc"></div>
<svg style="left:1693px;top:137px" width="16" height="16" viewBox="0 0 16 16"><circle cx="7" cy="7" r="6" stroke="#fff" stroke-width="1.3" fill="none"/><path d="M7 3 V7 H10" stroke="#fff" stroke-width="1.2" fill="none"/><path d="M8 12 L12 8 L15 11 L11 15Z" fill="#f2c070"/><path d="M10 14 L8 12 L12 8" fill="#fff"/></svg>
<div class="a" style="left:1719px;top:135px;width:25px;height:20px;background:transparent;border:1px solid #b4b8bc"></div>
<svg style="left:1724px;top:137px" width="16" height="16" viewBox="0 0 16 16"><rect x="1" y="2" width="10" height="13" fill="#e8a060"/><rect x="3.5" y="0.5" width="5" height="3" fill="#c07040"/><rect x="5" y="7" width="10" height="7" stroke="#fff" fill="#3a4350"/><path d="M6.5 9 L8 10.5 L6.5 12 M9 12 H12" stroke="#fff" stroke-width="0.8" fill="none"/></svg>
<div class="a" style="left:1750px;top:135px;width:25px;height:20px;background:transparent;border:1px solid #b4b8bc"></div>
<svg style="left:1755px;top:137px" width="16" height="16" viewBox="0 0 16 16"><path d="M3 0 V6 M0 3 H6" stroke="#5ab0f0" stroke-width="1.2"/><path d="M6 5 V15 L8.5 12.5 L10.5 16 L12 15 L10 11.5 H13Z" fill="#fff"/></svg>
<div class="a" style="left:1781px;top:135px;width:25px;height:20px;background:transparent;border:1px solid #b4b8bc"></div>
<svg style="left:1786px;top:137px" width="16" height="16" viewBox="0 0 16 16"><rect x="0" y="2" width="3" height="3" fill="#5ab0f0"/><rect x="13" y="2" width="3" height="3" fill="#5ab0f0"/><path d="M3 3.5 H13" stroke="#fff" stroke-dasharray="1 1"/><rect x="0" y="8" width="16" height="6" fill="#f2c040"/><path d="M2 8 V11 M5 8 V10 M8 8 V11 M11 8 V10 M14 8 V11" stroke="#6a5020" stroke-width="0.8"/></svg>
<div class="a" style="left:1812px;top:135px;width:25px;height:20px;background:transparent;border:1px solid #b4b8bc"></div>
<svg style="left:1817px;top:137px" width="16" height="16" viewBox="0 0 16 16"><path d="M1 14.5 L7 2 L11 9 M1 14.5 H14" stroke="#fff" stroke-width="1.2" fill="none"/><path d="M8 2 Q12 3 13 7 M11 4 L13 7 L14.5 4.5 M13 9 V14 M11.5 12.5 L13 14 L14.5 12.5" stroke="#f2c040" stroke-width="1" fill="none"/></svg>
<div class="a" style="left:1843px;top:135px;width:25px;height:20px;background:transparent;border:1px solid #b4b8bc"></div>
<svg style="left:1848px;top:137px" width="16" height="16" viewBox="0 0 16 16"><path d="M2 2 L14 14 M14 2 L2 14" stroke="#fff" stroke-width="1"/></svg>
<div class="a" style="left:1874px;top:135px;width:25px;height:20px;background:transparent;border:1px solid #b4b8bc"></div>
<svg style="left:1879px;top:137px" width="16" height="16" viewBox="0 0 16 16"><circle cx="8" cy="8" r="7" fill="#5ab0f0"/><path d="M6 6 Q6 4 8 4 Q10 4 10 6 Q10 7.5 8 8 V9.5" stroke="#fff" stroke-width="1.1" fill="none"/><rect x="7.5" y="11" width="1.2" height="1.2" fill="#fff"/></svg>
<div class="a" style="left:1898px;top:155px;width:15px;height:857px;background:#363b43;"></div>
<svg style="left:1902px;top:164px" width="8" height="5" viewBox="0 0 8 5"><path d="M0.5 4.5 L4 1 L7.5 4.5" stroke="#707882" stroke-width="1" fill="none"/></svg>
<div class="a" style="left:1899px;top:173px;width:13px;height:168px;background:#545e69;"></div>
<svg style="left:1902px;top:1002px" width="8" height="5" viewBox="0 0 8 5"><path d="M0.5 0.5 L4 4 L7.5 0.5" stroke="#707882" stroke-width="1" fill="none"/></svg>
<div class="a" style="left:1652px;top:170px;width:241px;height:80px;background:transparent;border:1px solid #5e6670"></div>
<div class="a" style="left:1652px;top:255px;width:241px;height:20px;background:transparent;border:1px solid #5e6670"></div>
<div class="a nw" style="left:1656px;top:286px;color:#fff;font-weight:bold;font-size:13.5px;line-height:18px">数字键区&lt;&lt;</div>
<div class="a nw" style="left:1662px;top:305px;width:36px;height:20px;border:1px solid #b4b8bc;color:#eef0f2;font-size:12.5px;line-height:18px;text-align:center">C</div>
<div class="a nw" style="left:1708px;top:305px;width:36px;height:20px;border:1px solid #b4b8bc;color:#eef0f2;font-size:12.5px;line-height:18px;text-align:center">&lt;--</div>
<div class="a nw" style="left:1754px;top:305px;width:36px;height:20px;border:1px solid #b4b8bc;color:#eef0f2;font-size:12.5px;line-height:18px;text-align:center">sqrt</div>
<div class="a nw" style="left:1800px;top:305px;width:36px;height:20px;border:1px solid #b4b8bc;color:#eef0f2;font-size:12.5px;line-height:18px;text-align:center">/</div>
<div class="a nw" style="left:1846px;top:305px;width:36px;height:20px;border:1px solid #b4b8bc;color:#eef0f2;font-size:12.5px;line-height:18px;text-align:center">1/x</div>
<div class="a nw" style="left:1662px;top:332px;width:36px;height:20px;border:1px solid #b4b8bc;color:#eef0f2;font-size:12.5px;line-height:18px;text-align:center">7</div>
<div class="a nw" style="left:1708px;top:332px;width:36px;height:20px;border:1px solid #b4b8bc;color:#eef0f2;font-size:12.5px;line-height:18px;text-align:center">8</div>
<div class="a nw" style="left:1754px;top:332px;width:36px;height:20px;border:1px solid #b4b8bc;color:#eef0f2;font-size:12.5px;line-height:18px;text-align:center">9</div>
<div class="a nw" style="left:1800px;top:332px;width:36px;height:20px;border:1px solid #b4b8bc;color:#eef0f2;font-size:12.5px;line-height:18px;text-align:center">*</div>
<div class="a nw" style="left:1846px;top:332px;width:36px;height:20px;border:1px solid #b4b8bc;color:#eef0f2;font-size:12.5px;line-height:18px;text-align:center">x^2</div>
<div class="a nw" style="left:1662px;top:359px;width:36px;height:20px;border:1px solid #b4b8bc;color:#eef0f2;font-size:12.5px;line-height:18px;text-align:center">4</div>
<div class="a nw" style="left:1708px;top:359px;width:36px;height:20px;border:1px solid #b4b8bc;color:#eef0f2;font-size:12.5px;line-height:18px;text-align:center">5</div>
<div class="a nw" style="left:1754px;top:359px;width:36px;height:20px;border:1px solid #b4b8bc;color:#eef0f2;font-size:12.5px;line-height:18px;text-align:center">6</div>
<div class="a nw" style="left:1800px;top:359px;width:36px;height:20px;border:1px solid #b4b8bc;color:#eef0f2;font-size:12.5px;line-height:18px;text-align:center">+</div>
<div class="a nw" style="left:1846px;top:359px;width:36px;height:20px;border:1px solid #b4b8bc;color:#eef0f2;font-size:12.5px;line-height:18px;text-align:center">x^3</div>
<div class="a nw" style="left:1662px;top:386px;width:36px;height:20px;border:1px solid #b4b8bc;color:#eef0f2;font-size:12.5px;line-height:18px;text-align:center">1</div>
<div class="a nw" style="left:1708px;top:386px;width:36px;height:20px;border:1px solid #b4b8bc;color:#eef0f2;font-size:12.5px;line-height:18px;text-align:center">2</div>
<div class="a nw" style="left:1754px;top:386px;width:36px;height:20px;border:1px solid #b4b8bc;color:#eef0f2;font-size:12.5px;line-height:18px;text-align:center">3</div>
<div class="a nw" style="left:1800px;top:386px;width:36px;height:20px;border:1px solid #b4b8bc;color:#eef0f2;font-size:12.5px;line-height:18px;text-align:center">-</div>
<div class="a nw" style="left:1846px;top:386px;width:36px;height:20px;border:1px solid #b4b8bc;color:#eef0f2;font-size:12.5px;line-height:18px;text-align:center">x^y</div>
<div class="a nw" style="left:1662px;top:413px;width:36px;height:20px;border:1px solid #b4b8bc;color:#eef0f2;font-size:12.5px;line-height:18px;text-align:center">0</div>
<div class="a nw" style="left:1708px;top:413px;width:36px;height:20px;border:1px solid #b4b8bc;color:#eef0f2;font-size:12.5px;line-height:18px;text-align:center">.</div>
<div class="a nw" style="left:1754px;top:413px;width:36px;height:20px;border:1px solid #b4b8bc;color:#eef0f2;font-size:12.5px;line-height:18px;text-align:center">pi</div>
<div class="a nw" style="left:1800px;top:413px;width:36px;height:20px;border:1px solid #b4b8bc;color:#eef0f2;font-size:12.5px;line-height:18px;text-align:center">(</div>
<div class="a nw" style="left:1846px;top:413px;width:36px;height:20px;border:1px solid #b4b8bc;color:#eef0f2;font-size:12.5px;line-height:18px;text-align:center">)</div>
<div class="a nw" style="left:1662px;top:440px;width:36px;height:20px;border:1px solid #b4b8bc;color:#eef0f2;font-size:12.5px;line-height:18px;text-align:center">=</div>
<div class="a nw" style="left:1708px;top:440px;width:36px;height:20px;border:1px solid #b4b8bc;color:#eef0f2;font-size:12.5px;line-height:18px;text-align:center">MS</div>
<div class="a nw" style="left:1754px;top:440px;width:36px;height:20px;border:1px solid #b4b8bc;color:#eef0f2;font-size:12.5px;line-height:18px;text-align:center">M+</div>
<div class="a nw" style="left:1800px;top:440px;width:36px;height:20px;border:1px solid #b4b8bc;color:#eef0f2;font-size:12.5px;line-height:18px;text-align:center">MR</div>
<div class="a nw" style="left:1846px;top:440px;width:36px;height:20px;border:1px solid #b4b8bc;color:#eef0f2;font-size:12.5px;line-height:18px;text-align:center">MC</div>
<div class="a nw" style="left:1656px;top:479px;color:#fff;font-weight:bold;font-size:13.5px;line-height:18px">科学&lt;&lt;</div>
<div class="a nw" style="left:1662px;top:497px;width:36px;height:20px;border:1px solid #b4b8bc;color:#eef0f2;font-size:12.5px;line-height:18px;text-align:center">sin</div>
<div class="a nw" style="left:1708px;top:497px;width:36px;height:20px;border:1px solid #b4b8bc;color:#eef0f2;font-size:12.5px;line-height:18px;text-align:center">cos</div>
<div class="a nw" style="left:1754px;top:497px;width:36px;height:20px;border:1px solid #b4b8bc;color:#eef0f2;font-size:12.5px;line-height:18px;text-align:center">tan</div>
<div class="a nw" style="left:1800px;top:497px;width:36px;height:20px;border:1px solid #b4b8bc;color:#eef0f2;font-size:12.5px;line-height:18px;text-align:center">log</div>
<div class="a nw" style="left:1846px;top:497px;width:36px;height:20px;border:1px solid #b4b8bc;color:#eef0f2;font-size:12.5px;line-height:18px;text-align:center">10^x</div>
<div class="a nw" style="left:1662px;top:524px;width:36px;height:20px;border:1px solid #b4b8bc;color:#eef0f2;font-size:12.5px;line-height:18px;text-align:center">asin</div>
<div class="a nw" style="left:1708px;top:524px;width:36px;height:20px;border:1px solid #b4b8bc;color:#eef0f2;font-size:12.5px;line-height:18px;text-align:center">acos</div>
<div class="a nw" style="left:1754px;top:524px;width:36px;height:20px;border:1px solid #b4b8bc;color:#eef0f2;font-size:12.5px;line-height:18px;text-align:center">atan</div>
<div class="a nw" style="left:1800px;top:524px;width:36px;height:20px;border:1px solid #b4b8bc;color:#eef0f2;font-size:12.5px;line-height:18px;text-align:center">ln</div>
<div class="a nw" style="left:1846px;top:524px;width:36px;height:20px;border:1px solid #b4b8bc;color:#eef0f2;font-size:12.5px;line-height:18px;text-align:center">e^x</div>
<div class="a nw" style="left:1662px;top:551px;width:36px;height:20px;border:1px solid #b4b8bc;color:#eef0f2;font-size:12.5px;line-height:18px;text-align:center">r2d</div>
<div class="a nw" style="left:1708px;top:551px;width:36px;height:20px;border:1px solid #b4b8bc;color:#eef0f2;font-size:12.5px;line-height:18px;text-align:center">d2r</div>
<div class="a nw" style="left:1754px;top:551px;width:36px;height:20px;border:1px solid #b4b8bc;color:#eef0f2;font-size:12.5px;line-height:18px;text-align:center">abs</div>
<div class="a nw" style="left:1800px;top:551px;width:36px;height:20px;border:1px solid #b4b8bc;color:#eef0f2;font-size:12.5px;line-height:18px;text-align:center">rnd</div>
<div class="a nw" style="left:1846px;top:551px;width:36px;height:20px;border:1px solid #b4b8bc;color:#eef0f2;font-size:12.5px;line-height:18px;text-align:center">trunc</div>
<div class="a nw" style="left:1656px;top:589px;color:#fff;font-weight:bold;font-size:13.5px;line-height:18px">变量&lt;&lt;</div>
<div class="a" style="left:1662px;top:608px;width:20px;height:20px;background:transparent;border:1px solid #b4b8bc"></div>
<div class="a nw" style="left:1665px;top:608px;color:#5ab0f0;font-family:Liberation Serif,serif;font-size:17px;line-height:18px"><i>x</i></div>
<svg style="left:1677px;top:610px" width="5" height="5" viewBox="0 0 5 5"><path d="M2.5 0 V5 M0 2.5 H5" stroke="#5ab0f0" stroke-width="1"/></svg>
<div class="a nw" style="left:1691px;top:608px;color:#b8c0c8;font-family:Liberation Serif,serif;font-size:17px;line-height:18px"><i>y</i></div>
<div class="a nw" style="left:1716px;top:608px;color:#b8c0c8;font-family:Liberation Serif,serif;font-size:17px;line-height:18px"><i>x</i></div>
<svg style="left:1741px;top:611px" width="12" height="14" viewBox="0 0 12 14"><rect x="0.5" y="0.5" width="11" height="13" fill="#fff"/><rect x="2" y="2" width="8" height="3" fill="#414954"/><path d="M2 7 H4 M5 7 H7 M8 7 H10 M2 9.5 H4 M5 9.5 H7 M8 9.5 H10 M2 12 H4 M5 12 H7 M8 12 H10" stroke="#414954" stroke-width="1.3"/></svg>
<div class="a" style="left:1652px;top:628px;width:241px;height:160px;background:transparent;border:1px solid #5e6670"></div>
<div class="a" style="left:1875px;top:629px;width:17px;height:158px;background:#363b43;"></div>
<svg style="left:1880px;top:634px" width="8" height="5" viewBox="0 0 8 5"><path d="M0.5 4.5 L4 1 L7.5 4.5" stroke="#707882" stroke-width="1" fill="none"/></svg>
<div class="a" style="left:1876px;top:647px;width:15px;height:95px;background:#545e69;"></div>
<svg style="left:1880px;top:775px" width="8" height="5" viewBox="0 0 8 5"><path d="M0.5 0.5 L4 4 L7.5 0.5" stroke="#707882" stroke-width="1" fill="none"/></svg>
<div class="a" style="left:1660px;top:635px;width:9px;height:9px;background:#e8e8e8;border:1px solid #888"></div>
<div class="a" style="left:1662px;top:639px;width:5px;height:1px;background:#333;"></div>
<svg style="left:1674px;top:631px" width="17" height="15" viewBox="0 0 17 15"><path d="M0 2 H6 L7 4 H15 V13 H0Z" fill="#f2b870"/><path d="M0 2 H6 L7 4 H0Z" fill="#f8d090"/><text x="12" y="16" font-size="11" font-style="italic" font-family="Liberation Serif" fill="#5ab0f0">x</text></svg>
<div class="a nw" style="left:1696px;top:631px;color:#eef0f2;font-size:12px;line-height:16px">变量样例</div>
<svg style="left:1683px;top:647px" width="14" height="140" viewBox="0 0 14 140"><path d="M0.5 0 V140" stroke="#6a727c" stroke-dasharray="1 2"/><path d="M1 11.5 H10" stroke="#6a727c" stroke-dasharray="1 2"/><path d="M1 31.5 H10" stroke="#6a727c" stroke-dasharray="1 2"/><path d="M1 51.5 H10" stroke="#6a727c" stroke-dasharray="1 2"/><path d="M1 71.5 H10" stroke="#6a727c" stroke-dasharray="1 2"/><path d="M1 91.5 H10" stroke="#6a727c" stroke-dasharray="1 2"/><path d="M1 111.5 H10" stroke="#6a727c" stroke-dasharray="1 2"/><path d="M1 131.5 H10" stroke="#6a727c" stroke-dasharray="1 2"/></svg>
<div class="a nw" style="left:1697px;top:650px;color:#5ab0f0;font-family:Liberation Serif,serif;font-weight:bold;font-size:15px;line-height:18px">k</div>
<div class="a nw" style="left:1715px;top:651px;color:#eef0f2;font-size:12.5px;line-height:16px">Phi</div>
<div class="a nw" style="left:1696px;top:670px;color:#5ab0f0;font-family:Liberation Serif,serif;font-size:17px;line-height:18px"><i>x</i></div>
<div class="a nw" style="left:1715px;top:671px;color:#eef0f2;font-size:12.5px;line-height:16px">dee</div>
<div class="a nw" style="left:1696px;top:690px;color:#5ab0f0;font-family:Liberation Serif,serif;font-size:17px;line-height:18px"><i>x</i></div>
<div class="a nw" style="left:1715px;top:691px;color:#eef0f2;font-size:12.5px;line-height:16px">ille</div>
<div class="a nw" style="left:1696px;top:710px;color:#5ab0f0;font-family:Liberation Serif,serif;font-size:17px;line-height:18px"><i>x</i></div>
<div class="a nw" style="left:1715px;top:711px;color:#eef0f2;font-size:12.5px;line-height:16px">mee</div>
<div class="a nw" style="left:1696px;top:730px;color:#5ab0f0;font-family:Liberation Serif,serif;font-size:17px;line-height:18px"><i>x</i></div>
<div class="a nw" style="left:1715px;top:731px;color:#eef0f2;font-size:12.5px;line-height:16px">nee</div>
<div class="a nw" style="left:1696px;top:750px;color:#5ab0f0;font-family:Liberation Serif,serif;font-size:17px;line-height:18px"><i>x</i></div>
<div class="a nw" style="left:1715px;top:751px;color:#eef0f2;font-size:12.5px;line-height:16px">rad</div>
<div class="a nw" style="left:1696px;top:770px;color:#5ab0f0;font-family:Liberation Serif,serif;font-size:17px;line-height:18px"><i>x</i></div>
<div class="a nw" style="left:1715px;top:771px;color:#eef0f2;font-size:12.5px;line-height:16px">vee</div>
<div class="a nw" style="left:1654px;top:788px;color:#eef0f2;font-size:12px;line-height:16px">详细信息</div>
<div class="a" style="left:1654px;top:808px;width:237px;height:80px;background:transparent;border:1px solid #5e6670"></div>
<div class="a nw" style="left:1656px;top:900px;color:#fff;font-weight:bold;font-size:13.5px;line-height:18px">单位转换&lt;&lt;</div>
<div class="a" style="left:1656px;top:918px;width:240px;height:95px;overflow:hidden">
<div class="a" style="left:101px;top:0px;width:1px;height:96px;background:#525b66;"></div>
<div class="a" style="left:230px;top:0px;width:1px;height:96px;background:#525b66;"></div>
<div class="a nw" style="left:23px;top:2px;color:#eef0f2;font-size:12px;line-height:16px">单位类型</div>
<div class="a nw" style="left:107px;top:2px;color:#eef0f2;font-size:12px;line-height:16px">长度</div>
<div class="a" style="left:0px;top:20px;width:231px;height:1px;background:#525b66;"></div>
<div class="a nw" style="left:23px;top:23px;color:#eef0f2;font-size:12px;line-height:16px">转换自</div>
<div class="a nw" style="left:107px;top:23px;color:#eef0f2;font-size:12px;line-height:16px">米</div>
<div class="a" style="left:0px;top:41px;width:231px;height:1px;background:#525b66;"></div>
<div class="a nw" style="left:23px;top:44px;color:#eef0f2;font-size:12px;line-height:16px">转换到</div>
<div class="a nw" style="left:107px;top:44px;color:#eef0f2;font-size:12px;line-height:16px">米</div>
<div class="a" style="left:0px;top:62px;width:231px;height:1px;background:#525b66;"></div>
<div class="a nw" style="left:23px;top:65px;color:#eef0f2;font-size:12px;line-height:16px">要转换的值</div>
<div class="a nw" style="left:107px;top:65px;color:#eef0f2;font-size:12px;line-height:16px">0</div>
<div class="a" style="left:0px;top:83px;width:231px;height:1px;background:#525b66;"></div>
<div class="a nw" style="left:23px;top:86px;color:#eef0f2;font-size:12px;line-height:16px">已转换的值</div>
<div class="a nw" style="left:107px;top:86px;color:#eef0f2;font-size:12px;line-height:16px">0</div>
<div class="a" style="left:0px;top:104px;width:231px;height:1px;background:#525b66;"></div>
</div>
<div class="a" style="left:1642px;top:1013px;width:276px;height:1px;background:#333a45;"></div>
<div class="a" style="left:1714px;top:866px;width:190px;height:26px;background:#fdfdff;border-radius:3px"></div>
<svg style="left:1702px;top:862px" width="34" height="32" viewBox="0 0 34 32"><g transform="rotate(-12 17 16)"><rect x="3" y="3" width="28" height="26" rx="6" fill="#e8552a"/><path d="M23 9 Q17 6 12 9 Q8 12 13 15 Q22 17 20 21 Q16 25 9 22" stroke="#fff" stroke-width="4" fill="none"/></g></svg>
<div class="a nw" style="left:1738px;top:868px;color:#1460d8;font-weight:bold;font-size:15px;line-height:20px">中</div>
<svg style="left:1765px;top:872px" width="14" height="14" viewBox="0 0 14 14"><circle cx="3" cy="4" r="2" stroke="#1460d8" stroke-width="1.3" fill="none"/><path d="M10 7 Q11 9 9 12" stroke="#1460d8" stroke-width="2.2" fill="none"/></svg>
<svg style="left:1789px;top:870px" width="12" height="18" viewBox="0 0 12 18"><rect x="3" y="0" width="6" height="11" rx="3" fill="#1460d8"/><path d="M1 7 Q1 13 6 13 Q11 13 11 7 M6 13 V16 M3 16 H9" stroke="#1460d8" stroke-width="1.4" fill="none"/></svg>
<svg style="left:1812px;top:873px" width="16" height="12" viewBox="0 0 16 12"><rect x="0.5" y="0.5" width="15" height="11" rx="1.5" stroke="#1460d8" stroke-width="1.4" fill="none"/><path d="M3 4 H4 M6 4 H7 M9 4 H10 M12 4 H13 M3 7 H4 M6 7 H7 M9 7 H10 M12 7 H13 M4 9.5 H12" stroke="#1460d8" stroke-width="1.3"/></svg>
<svg style="left:1836px;top:872px" width="15" height="13" viewBox="0 0 15 13"><path d="M4 0 L0 3 L2 6 L4 5 V13 H11 V5 L13 6 L15 3 L11 0 Q7.5 3 4 0Z" fill="#1460d8"/></svg>
<svg style="left:1860px;top:873px" width="13" height="13" viewBox="0 0 13 13"><rect x="0" y="0" width="5.5" height="5.5" rx="1.5" fill="#1460d8"/><rect x="7.5" y="0" width="5.5" height="5.5" rx="1.5" fill="#1460d8"/><rect x="0" y="7.5" width="5.5" height="5.5" rx="1.5" fill="#1460d8"/><rect x="7.5" y="7.5" width="5.5" height="5.5" rx="1.5" fill="#1460d8"/></svg>
<svg style="left:1883px;top:870px" width="16" height="16" viewBox="0 0 16 16"><circle cx="8" cy="8" r="7.5" fill="#f4d8e0"/><circle cx="8" cy="8.5" r="5" fill="#fff" stroke="#e07080" stroke-width="0.8"/><rect x="4" y="7" width="8" height="4" rx="1" fill="#e06a30"/></svg>
</body></html>
